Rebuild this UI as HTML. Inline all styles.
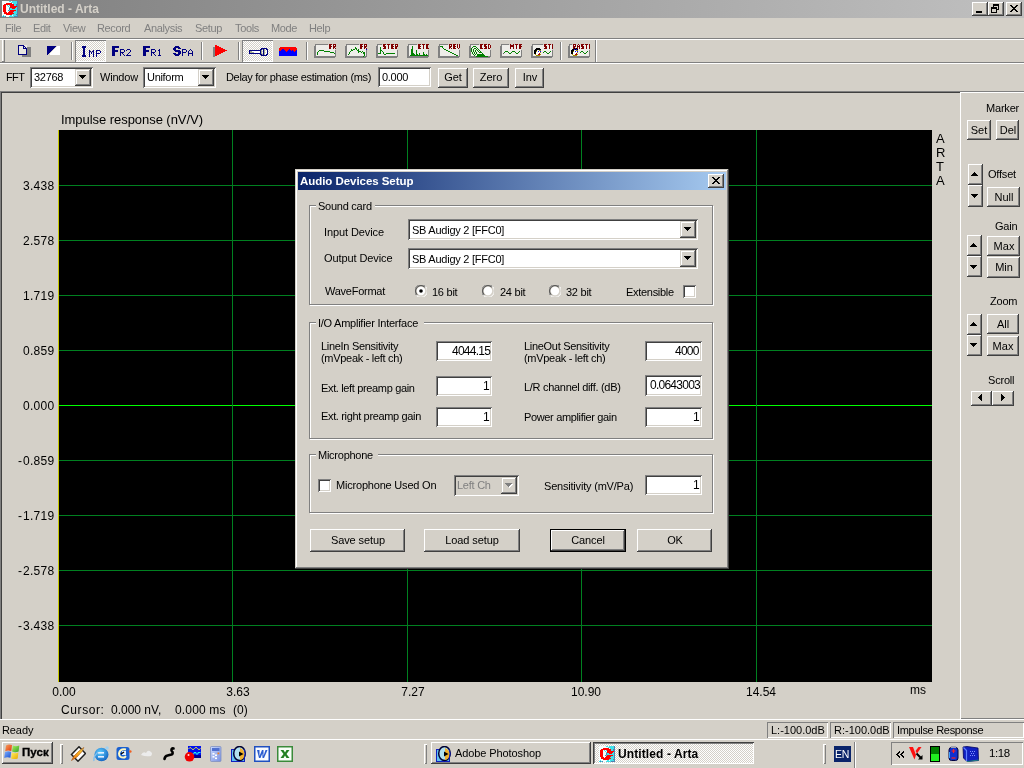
<!DOCTYPE html>
<html><head><meta charset="utf-8"><style>
html,body{margin:0;padding:0;}
body{width:1024px;height:768px;overflow:hidden;position:relative;background:#d4d0c8;-webkit-font-smoothing:antialiased;font-family:"Liberation Sans",sans-serif;font-size:11px;}
div,span,svg{position:absolute;box-sizing:border-box;}
.t{white-space:pre;will-change:transform;}
</style></head><body>
<div style="left:0px;top:0px;width:1024px;height:18px;background:linear-gradient(to right,#808080,#c0c0c0)"></div>
<svg style="left:2px;top:1px" width="16" height="16" viewBox="0 0 16 16" shape-rendering="crispEdges"><rect x="0" y="0" width="7" height="1" fill="#f4fcfc"/><rect x="9" y="0" width="1" height="1" fill="#f4fcfc"/><rect x="4" y="15" width="3" height="1" fill="#f4fcfc"/><rect x="0" y="1" width="9" height="1" fill="#f4fcfc"/><rect x="0" y="9" width="1" height="1" fill="#f4fcfc"/><rect x="4" y="9" width="2" height="1" fill="#f4fcfc"/><rect x="0" y="6" width="1" height="1" fill="#f4fcfc"/><rect x="4" y="6" width="3" height="1" fill="#f4fcfc"/><rect x="0" y="7" width="1" height="1" fill="#f4fcfc"/><rect x="4" y="7" width="3" height="1" fill="#f4fcfc"/><rect x="0" y="13" width="4" height="1" fill="#f4fcfc"/><rect x="0" y="2" width="4" height="1" fill="#f4fcfc"/><rect x="10" y="2" width="1" height="1" fill="#f4fcfc"/><rect x="0" y="10" width="1" height="1" fill="#f4fcfc"/><rect x="4" y="10" width="3" height="1" fill="#f4fcfc"/><rect x="0" y="5" width="1" height="1" fill="#f4fcfc"/><rect x="4" y="5" width="2" height="1" fill="#f4fcfc"/><rect x="7" y="5" width="1" height="1" fill="#f4fcfc"/><rect x="0" y="8" width="1" height="1" fill="#f4fcfc"/><rect x="4" y="8" width="3" height="1" fill="#f4fcfc"/><rect x="0" y="14" width="1" height="1" fill="#f4fcfc"/><rect x="2" y="14" width="6" height="1" fill="#f4fcfc"/><rect x="10" y="14" width="1" height="1" fill="#f4fcfc"/><rect x="0" y="3" width="2" height="1" fill="#f4fcfc"/><rect x="0" y="11" width="2" height="1" fill="#f4fcfc"/><rect x="5" y="11" width="1" height="1" fill="#f4fcfc"/><rect x="0" y="12" width="2" height="1" fill="#f4fcfc"/><rect x="0" y="4" width="1" height="1" fill="#f4fcfc"/><rect x="4" y="4" width="1" height="1" fill="#f4fcfc"/><rect x="6" y="4" width="1" height="1" fill="#f4fcfc"/><rect x="5" y="4" width="1" height="1" fill="#40e0e8"/><rect x="7" y="4" width="1" height="1" fill="#40e0e8"/><rect x="12" y="4" width="2" height="1" fill="#40e0e8"/><rect x="9" y="1" width="6" height="1" fill="#40e0e8"/><rect x="8" y="7" width="2" height="1" fill="#40e0e8"/><rect x="13" y="7" width="2" height="1" fill="#40e0e8"/><rect x="12" y="10" width="3" height="1" fill="#40e0e8"/><rect x="10" y="13" width="4" height="1" fill="#40e0e8"/><rect x="7" y="0" width="2" height="1" fill="#40e0e8"/><rect x="10" y="0" width="5" height="1" fill="#40e0e8"/><rect x="11" y="2" width="4" height="1" fill="#40e0e8"/><rect x="8" y="8" width="7" height="1" fill="#40e0e8"/><rect x="1" y="14" width="1" height="1" fill="#40e0e8"/><rect x="8" y="14" width="2" height="1" fill="#40e0e8"/><rect x="11" y="14" width="4" height="1" fill="#40e0e8"/><rect x="0" y="15" width="1" height="1" fill="#40e0e8"/><rect x="2" y="15" width="1" height="1" fill="#40e0e8"/><rect x="7" y="15" width="5" height="1" fill="#40e0e8"/><rect x="11" y="11" width="4" height="1" fill="#40e0e8"/><rect x="6" y="5" width="1" height="1" fill="#40e0e8"/><rect x="12" y="3" width="2" height="1" fill="#40e0e8"/><rect x="7" y="6" width="1" height="1" fill="#40e0e8"/><rect x="14" y="6" width="1" height="1" fill="#40e0e8"/><rect x="12" y="12" width="3" height="1" fill="#40e0e8"/><rect x="7" y="9" width="1" height="1" fill="#40e0e8"/><rect x="14" y="9" width="1" height="1" fill="#40e0e8"/><rect x="14" y="4" width="2" height="1" fill="#5080b0"/><rect x="14" y="13" width="2" height="1" fill="#5080b0"/><rect x="15" y="2" width="1" height="1" fill="#5080b0"/><rect x="15" y="5" width="1" height="1" fill="#5080b0"/><rect x="15" y="11" width="1" height="1" fill="#5080b0"/><rect x="7" y="7" width="1" height="1" fill="#5080b0"/><rect x="15" y="7" width="1" height="1" fill="#5080b0"/><rect x="7" y="8" width="1" height="1" fill="#5080b0"/><rect x="15" y="8" width="1" height="1" fill="#5080b0"/><rect x="15" y="14" width="1" height="1" fill="#5080b0"/><rect x="1" y="15" width="1" height="1" fill="#5080b0"/><rect x="3" y="15" width="1" height="1" fill="#5080b0"/><rect x="12" y="15" width="4" height="1" fill="#5080b0"/><rect x="14" y="3" width="2" height="1" fill="#5080b0"/><rect x="15" y="1" width="1" height="1" fill="#5080b0"/><rect x="15" y="10" width="1" height="1" fill="#5080b0"/><rect x="15" y="0" width="1" height="1" fill="#5080b0"/><rect x="15" y="6" width="1" height="1" fill="#5080b0"/><rect x="6" y="9" width="1" height="1" fill="#5080b0"/><rect x="15" y="9" width="1" height="1" fill="#5080b0"/><rect x="15" y="12" width="1" height="1" fill="#5080b0"/><rect x="1" y="9" width="3" height="1" fill="#ff0000"/><rect x="8" y="9" width="6" height="1" fill="#ff0000"/><rect x="1" y="6" width="3" height="1" fill="#ff0000"/><rect x="8" y="6" width="6" height="1" fill="#ff0000"/><rect x="1" y="5" width="3" height="1" fill="#ff0000"/><rect x="8" y="5" width="7" height="1" fill="#ff0000"/><rect x="2" y="11" width="3" height="1" fill="#ff0000"/><rect x="6" y="11" width="5" height="1" fill="#ff0000"/><rect x="4" y="2" width="6" height="1" fill="#ff0000"/><rect x="1" y="10" width="3" height="1" fill="#ff0000"/><rect x="7" y="10" width="5" height="1" fill="#ff0000"/><rect x="2" y="3" width="10" height="1" fill="#ff0000"/><rect x="2" y="12" width="10" height="1" fill="#ff0000"/><rect x="1" y="7" width="3" height="1" fill="#ff0000"/><rect x="10" y="7" width="3" height="1" fill="#ff0000"/><rect x="1" y="4" width="3" height="1" fill="#ff0000"/><rect x="8" y="4" width="4" height="1" fill="#ff0000"/><rect x="1" y="8" width="3" height="1" fill="#ff0000"/><rect x="4" y="13" width="6" height="1" fill="#ff0000"/></svg>
<span class="t" style="top:3px;font-size:12px;line-height:12px;color:#d4d0c8;font-weight:bold;left:20px;">Untitled - Arta</span>
<div style="left:972px;top:2px;width:16px;height:14px;background:#d4d0c8;box-shadow:inset -1px -1px #404040,inset 1px 1px #fff,inset -2px -2px #808080,inset 2px 2px #d4d0c8;"></div>
<div style="left:988px;top:2px;width:16px;height:14px;background:#d4d0c8;box-shadow:inset -1px -1px #404040,inset 1px 1px #fff,inset -2px -2px #808080,inset 2px 2px #d4d0c8;"></div>
<div style="left:1006px;top:2px;width:16px;height:14px;background:#d4d0c8;box-shadow:inset -1px -1px #404040,inset 1px 1px #fff,inset -2px -2px #808080,inset 2px 2px #d4d0c8;"></div>
<div style="left:976px;top:11px;width:6px;height:2px;background:#000"></div>
<svg style="left:991px;top:4px" width="8" height="9" viewBox="0 0 8 9" shape-rendering="crispEdges"><rect x="2" y="0" width="6" height="1" fill="#000"/><rect x="0" y="4" width="6" height="1" fill="#000"/><rect x="7" y="4" width="1" height="1" fill="#000"/><rect x="0" y="3" width="6" height="1" fill="#000"/><rect x="7" y="3" width="1" height="1" fill="#000"/><rect x="2" y="1" width="6" height="1" fill="#000"/><rect x="0" y="7" width="1" height="1" fill="#000"/><rect x="5" y="7" width="1" height="1" fill="#000"/><rect x="0" y="5" width="1" height="1" fill="#000"/><rect x="5" y="5" width="3" height="1" fill="#000"/><rect x="2" y="2" width="1" height="1" fill="#000"/><rect x="7" y="2" width="1" height="1" fill="#000"/><rect x="0" y="8" width="6" height="1" fill="#000"/><rect x="0" y="6" width="1" height="1" fill="#000"/><rect x="5" y="6" width="1" height="1" fill="#000"/></svg>
<svg style="left:1010px;top:5px" width="8" height="7" viewBox="0 0 8 7" shape-rendering="crispEdges"><rect x="2" y="4" width="4" height="1" fill="#000"/><rect x="3" y="3" width="2" height="1" fill="#000"/><rect x="1" y="1" width="2" height="1" fill="#000"/><rect x="5" y="1" width="2" height="1" fill="#000"/><rect x="2" y="2" width="4" height="1" fill="#000"/><rect x="0" y="0" width="2" height="1" fill="#000"/><rect x="6" y="0" width="2" height="1" fill="#000"/><rect x="0" y="6" width="2" height="1" fill="#000"/><rect x="6" y="6" width="2" height="1" fill="#000"/><rect x="1" y="5" width="2" height="1" fill="#000"/><rect x="5" y="5" width="2" height="1" fill="#000"/></svg>
<span class="t" style="top:23px;font-size:11px;line-height:11px;color:#808080;letter-spacing:-0.35px;left:5px;">File</span>
<span class="t" style="top:23px;font-size:11px;line-height:11px;color:#808080;letter-spacing:-0.35px;left:33px;">Edit</span>
<span class="t" style="top:23px;font-size:11px;line-height:11px;color:#808080;letter-spacing:-0.35px;left:63px;">View</span>
<span class="t" style="top:23px;font-size:11px;line-height:11px;color:#808080;letter-spacing:-0.35px;left:97px;">Record</span>
<span class="t" style="top:23px;font-size:11px;line-height:11px;color:#808080;letter-spacing:-0.35px;left:144px;">Analysis</span>
<span class="t" style="top:23px;font-size:11px;line-height:11px;color:#808080;letter-spacing:-0.35px;left:195px;">Setup</span>
<span class="t" style="top:23px;font-size:11px;line-height:11px;color:#808080;letter-spacing:-0.35px;left:235px;">Tools</span>
<span class="t" style="top:23px;font-size:11px;line-height:11px;color:#808080;letter-spacing:-0.35px;left:271px;">Mode</span>
<span class="t" style="top:23px;font-size:11px;line-height:11px;color:#808080;letter-spacing:-0.35px;left:309px;">Help</span>
<div style="left:0px;top:38px;width:1024px;height:1px;background:#808080"></div>
<div style="left:0px;top:39px;width:1024px;height:1px;background:#fff"></div>
<div style="left:2px;top:40px;width:1px;height:21px;background:#fff"></div>
<div style="left:4px;top:40px;width:1px;height:22px;background:#808080"></div>
<div style="left:2px;top:61px;width:3px;height:1px;background:#808080"></div>
<div style="left:0px;top:62px;width:1024px;height:1px;background:#808080"></div>
<div style="left:0px;top:63px;width:1024px;height:1px;background:#fff"></div>
<div style="left:595px;top:40px;width:1px;height:22px;background:#808080"></div>
<div style="left:596px;top:40px;width:1px;height:22px;background:#fff"></div>
<div style="left:71px;top:42px;width:1px;height:18px;background:#808080"></div>
<div style="left:72px;top:42px;width:1px;height:18px;background:#fff"></div>
<div style="left:75px;top:40px;width:31px;height:22px;background-color:#fff;background-image:linear-gradient(45deg,#d4d0c8 25%,transparent 25%,transparent 75%,#d4d0c8 75%),linear-gradient(45deg,#d4d0c8 25%,transparent 25%,transparent 75%,#d4d0c8 75%);background-size:2px 2px;background-position:0 0,1px 1px;box-shadow:inset 1px 1px #808080,inset -1px -1px #fff"></div>
<div style="left:201px;top:42px;width:1px;height:18px;background:#808080"></div>
<div style="left:202px;top:42px;width:1px;height:18px;background:#fff"></div>
<div style="left:238px;top:42px;width:1px;height:18px;background:#808080"></div>
<div style="left:239px;top:42px;width:1px;height:18px;background:#fff"></div>
<div style="left:242px;top:40px;width:31px;height:22px;background-color:#fff;background-image:linear-gradient(45deg,#d4d0c8 25%,transparent 25%,transparent 75%,#d4d0c8 75%),linear-gradient(45deg,#d4d0c8 25%,transparent 25%,transparent 75%,#d4d0c8 75%);background-size:2px 2px;background-position:0 0,1px 1px;box-shadow:inset 1px 1px #808080,inset -1px -1px #fff"></div>
<svg style="left:22px;top:47px" width="9" height="10" viewBox="0 0 9 10" shape-rendering="crispEdges"><rect x="0" y="0" width="9" height="1" fill="#808080"/><rect x="0" y="9" width="9" height="1" fill="#808080"/><rect x="0" y="1" width="9" height="1" fill="#808080"/><rect x="0" y="5" width="9" height="1" fill="#808080"/><rect x="0" y="2" width="9" height="1" fill="#808080"/><rect x="0" y="6" width="9" height="1" fill="#808080"/><rect x="0" y="3" width="9" height="1" fill="#808080"/><rect x="0" y="7" width="9" height="1" fill="#808080"/><rect x="0" y="4" width="9" height="1" fill="#808080"/><rect x="0" y="8" width="9" height="1" fill="#808080"/></svg><svg style="left:18px;top:45px" width="9" height="10" viewBox="0 0 9 10" shape-rendering="crispEdges"><rect x="0" y="0" width="6" height="1" fill="#000080"/><rect x="0" y="9" width="9" height="1" fill="#000080"/><rect x="0" y="1" width="1" height="1" fill="#000080"/><rect x="5" y="1" width="2" height="1" fill="#000080"/><rect x="0" y="2" width="1" height="1" fill="#000080"/><rect x="5" y="2" width="1" height="1" fill="#000080"/><rect x="7" y="2" width="1" height="1" fill="#000080"/><rect x="0" y="3" width="1" height="1" fill="#000080"/><rect x="5" y="3" width="4" height="1" fill="#000080"/><rect x="0" y="5" width="1" height="1" fill="#000080"/><rect x="8" y="5" width="1" height="1" fill="#000080"/><rect x="0" y="6" width="1" height="1" fill="#000080"/><rect x="8" y="6" width="1" height="1" fill="#000080"/><rect x="0" y="8" width="1" height="1" fill="#000080"/><rect x="8" y="8" width="1" height="1" fill="#000080"/><rect x="0" y="7" width="1" height="1" fill="#000080"/><rect x="8" y="7" width="1" height="1" fill="#000080"/><rect x="0" y="4" width="1" height="1" fill="#000080"/><rect x="8" y="4" width="1" height="1" fill="#000080"/><rect x="1" y="4" width="7" height="1" fill="#e8e6e0"/><rect x="1" y="3" width="4" height="1" fill="#e8e6e0"/><rect x="1" y="1" width="4" height="1" fill="#e8e6e0"/><rect x="7" y="1" width="2" height="1" fill="#e8e6e0"/><rect x="1" y="7" width="7" height="1" fill="#e8e6e0"/><rect x="1" y="6" width="7" height="1" fill="#e8e6e0"/><rect x="6" y="0" width="3" height="1" fill="#e8e6e0"/><rect x="1" y="2" width="4" height="1" fill="#e8e6e0"/><rect x="6" y="2" width="1" height="1" fill="#e8e6e0"/><rect x="8" y="2" width="1" height="1" fill="#e8e6e0"/><rect x="1" y="5" width="7" height="1" fill="#e8e6e0"/><rect x="1" y="8" width="7" height="1" fill="#e8e6e0"/></svg><svg style="left:47px;top:46px" width="13" height="9" viewBox="0 0 13 9" shape-rendering="crispEdges"><rect x="0" y="0" width="9" height="1" fill="#000080"/><rect x="0" y="4" width="5" height="1" fill="#000080"/><rect x="0" y="3" width="6" height="1" fill="#000080"/><rect x="0" y="1" width="8" height="1" fill="#000080"/><rect x="0" y="2" width="7" height="1" fill="#000080"/><rect x="0" y="5" width="4" height="1" fill="#000080"/><rect x="0" y="6" width="3" height="1" fill="#000080"/><rect x="0" y="8" width="1" height="1" fill="#000080"/><rect x="0" y="7" width="2" height="1" fill="#000080"/><rect x="6" y="4" width="7" height="1" fill="#ffffff"/><rect x="9" y="1" width="4" height="1" fill="#ffffff"/><rect x="3" y="7" width="10" height="1" fill="#ffffff"/><rect x="4" y="6" width="9" height="1" fill="#ffffff"/><rect x="8" y="2" width="5" height="1" fill="#ffffff"/><rect x="5" y="5" width="8" height="1" fill="#ffffff"/><rect x="10" y="0" width="3" height="1" fill="#ffffff"/><rect x="7" y="3" width="6" height="1" fill="#ffffff"/><rect x="3" y="8" width="10" height="1" fill="#ffffff"/></svg><svg style="left:82px;top:46px" width="4" height="11" viewBox="0 0 4 11" shape-rendering="crispEdges"><rect x="0" y="1" width="4" height="1" fill="#000080"/><rect x="0" y="10" width="4" height="1" fill="#000080"/><rect x="1" y="2" width="2" height="1" fill="#000080"/><rect x="0" y="0" width="4" height="1" fill="#000080"/><rect x="1" y="6" width="2" height="1" fill="#000080"/><rect x="1" y="5" width="2" height="1" fill="#000080"/><rect x="1" y="3" width="2" height="1" fill="#000080"/><rect x="0" y="9" width="4" height="1" fill="#000080"/><rect x="1" y="8" width="2" height="1" fill="#000080"/><rect x="1" y="4" width="2" height="1" fill="#000080"/><rect x="1" y="7" width="2" height="1" fill="#000080"/></svg><svg style="left:89px;top:50px" width="5" height="7" viewBox="0 0 5 7" shape-rendering="crispEdges"><rect x="0" y="1" width="2" height="1" fill="#000080"/><rect x="3" y="1" width="2" height="1" fill="#000080"/><rect x="0" y="4" width="1" height="1" fill="#000080"/><rect x="4" y="4" width="1" height="1" fill="#000080"/><rect x="0" y="0" width="1" height="1" fill="#000080"/><rect x="4" y="0" width="1" height="1" fill="#000080"/><rect x="0" y="3" width="1" height="1" fill="#000080"/><rect x="2" y="3" width="1" height="1" fill="#000080"/><rect x="4" y="3" width="1" height="1" fill="#000080"/><rect x="0" y="6" width="1" height="1" fill="#000080"/><rect x="4" y="6" width="1" height="1" fill="#000080"/><rect x="0" y="2" width="1" height="1" fill="#000080"/><rect x="2" y="2" width="1" height="1" fill="#000080"/><rect x="4" y="2" width="1" height="1" fill="#000080"/><rect x="0" y="5" width="1" height="1" fill="#000080"/><rect x="4" y="5" width="1" height="1" fill="#000080"/></svg><svg style="left:96px;top:50px" width="5" height="7" viewBox="0 0 5 7" shape-rendering="crispEdges"><rect x="0" y="1" width="1" height="1" fill="#000080"/><rect x="4" y="1" width="1" height="1" fill="#000080"/><rect x="0" y="3" width="4" height="1" fill="#000080"/><rect x="0" y="4" width="1" height="1" fill="#000080"/><rect x="0" y="0" width="4" height="1" fill="#000080"/><rect x="0" y="2" width="1" height="1" fill="#000080"/><rect x="4" y="2" width="1" height="1" fill="#000080"/><rect x="0" y="6" width="1" height="1" fill="#000080"/><rect x="0" y="5" width="1" height="1" fill="#000080"/></svg><svg style="left:112px;top:46px" width="7" height="10" viewBox="0 0 7 10" shape-rendering="crispEdges"><rect x="0" y="0" width="7" height="1" fill="#000080"/><rect x="0" y="4" width="6" height="1" fill="#000080"/><rect x="0" y="1" width="7" height="1" fill="#000080"/><rect x="0" y="2" width="3" height="1" fill="#000080"/><rect x="0" y="5" width="6" height="1" fill="#000080"/><rect x="0" y="6" width="3" height="1" fill="#000080"/><rect x="0" y="8" width="3" height="1" fill="#000080"/><rect x="0" y="3" width="3" height="1" fill="#000080"/><rect x="0" y="9" width="3" height="1" fill="#000080"/><rect x="0" y="7" width="3" height="1" fill="#000080"/></svg><svg style="left:120px;top:49px" width="5" height="7" viewBox="0 0 5 7" shape-rendering="crispEdges"><rect x="0" y="1" width="1" height="1" fill="#000080"/><rect x="4" y="1" width="1" height="1" fill="#000080"/><rect x="0" y="3" width="4" height="1" fill="#000080"/><rect x="0" y="4" width="1" height="1" fill="#000080"/><rect x="2" y="4" width="1" height="1" fill="#000080"/><rect x="0" y="0" width="4" height="1" fill="#000080"/><rect x="0" y="6" width="1" height="1" fill="#000080"/><rect x="4" y="6" width="1" height="1" fill="#000080"/><rect x="0" y="2" width="1" height="1" fill="#000080"/><rect x="4" y="2" width="1" height="1" fill="#000080"/><rect x="0" y="5" width="1" height="1" fill="#000080"/><rect x="3" y="5" width="1" height="1" fill="#000080"/></svg><svg style="left:126px;top:49px" width="5" height="7" viewBox="0 0 5 7" shape-rendering="crispEdges"><rect x="0" y="1" width="1" height="1" fill="#000080"/><rect x="4" y="1" width="1" height="1" fill="#000080"/><rect x="2" y="4" width="1" height="1" fill="#000080"/><rect x="1" y="5" width="1" height="1" fill="#000080"/><rect x="0" y="6" width="5" height="1" fill="#000080"/><rect x="1" y="0" width="3" height="1" fill="#000080"/><rect x="4" y="2" width="1" height="1" fill="#000080"/><rect x="3" y="3" width="1" height="1" fill="#000080"/></svg><svg style="left:143px;top:46px" width="7" height="10" viewBox="0 0 7 10" shape-rendering="crispEdges"><rect x="0" y="0" width="7" height="1" fill="#000080"/><rect x="0" y="4" width="6" height="1" fill="#000080"/><rect x="0" y="1" width="7" height="1" fill="#000080"/><rect x="0" y="2" width="3" height="1" fill="#000080"/><rect x="0" y="5" width="6" height="1" fill="#000080"/><rect x="0" y="6" width="3" height="1" fill="#000080"/><rect x="0" y="8" width="3" height="1" fill="#000080"/><rect x="0" y="3" width="3" height="1" fill="#000080"/><rect x="0" y="9" width="3" height="1" fill="#000080"/><rect x="0" y="7" width="3" height="1" fill="#000080"/></svg><svg style="left:151px;top:49px" width="5" height="7" viewBox="0 0 5 7" shape-rendering="crispEdges"><rect x="0" y="1" width="1" height="1" fill="#000080"/><rect x="4" y="1" width="1" height="1" fill="#000080"/><rect x="0" y="3" width="4" height="1" fill="#000080"/><rect x="0" y="4" width="1" height="1" fill="#000080"/><rect x="2" y="4" width="1" height="1" fill="#000080"/><rect x="0" y="0" width="4" height="1" fill="#000080"/><rect x="0" y="6" width="1" height="1" fill="#000080"/><rect x="4" y="6" width="1" height="1" fill="#000080"/><rect x="0" y="2" width="1" height="1" fill="#000080"/><rect x="4" y="2" width="1" height="1" fill="#000080"/><rect x="0" y="5" width="1" height="1" fill="#000080"/><rect x="3" y="5" width="1" height="1" fill="#000080"/></svg><svg style="left:157px;top:49px" width="5" height="7" viewBox="0 0 5 7" shape-rendering="crispEdges"><rect x="2" y="4" width="1" height="1" fill="#000080"/><rect x="1" y="1" width="2" height="1" fill="#000080"/><rect x="2" y="0" width="1" height="1" fill="#000080"/><rect x="2" y="3" width="1" height="1" fill="#000080"/><rect x="1" y="6" width="3" height="1" fill="#000080"/><rect x="2" y="2" width="1" height="1" fill="#000080"/><rect x="2" y="5" width="1" height="1" fill="#000080"/></svg><svg style="left:173px;top:46px" width="8" height="10" viewBox="0 0 8 10" shape-rendering="crispEdges"><rect x="2" y="0" width="4" height="1" fill="#000080"/><rect x="1" y="4" width="6" height="1" fill="#000080"/><rect x="1" y="1" width="6" height="1" fill="#000080"/><rect x="2" y="9" width="4" height="1" fill="#000080"/><rect x="0" y="7" width="3" height="1" fill="#000080"/><rect x="5" y="7" width="3" height="1" fill="#000080"/><rect x="0" y="2" width="3" height="1" fill="#000080"/><rect x="5" y="2" width="3" height="1" fill="#000080"/><rect x="2" y="5" width="6" height="1" fill="#000080"/><rect x="0" y="3" width="3" height="1" fill="#000080"/><rect x="1" y="8" width="6" height="1" fill="#000080"/><rect x="5" y="6" width="3" height="1" fill="#000080"/></svg><svg style="left:182px;top:49px" width="5" height="7" viewBox="0 0 5 7" shape-rendering="crispEdges"><rect x="0" y="1" width="1" height="1" fill="#000080"/><rect x="4" y="1" width="1" height="1" fill="#000080"/><rect x="0" y="3" width="4" height="1" fill="#000080"/><rect x="0" y="4" width="1" height="1" fill="#000080"/><rect x="0" y="0" width="4" height="1" fill="#000080"/><rect x="0" y="2" width="1" height="1" fill="#000080"/><rect x="4" y="2" width="1" height="1" fill="#000080"/><rect x="0" y="6" width="1" height="1" fill="#000080"/><rect x="0" y="5" width="1" height="1" fill="#000080"/></svg><svg style="left:188px;top:49px" width="5" height="7" viewBox="0 0 5 7" shape-rendering="crispEdges"><rect x="0" y="4" width="5" height="1" fill="#000080"/><rect x="0" y="3" width="1" height="1" fill="#000080"/><rect x="4" y="3" width="1" height="1" fill="#000080"/><rect x="1" y="1" width="1" height="1" fill="#000080"/><rect x="3" y="1" width="1" height="1" fill="#000080"/><rect x="2" y="0" width="1" height="1" fill="#000080"/><rect x="0" y="6" width="1" height="1" fill="#000080"/><rect x="4" y="6" width="1" height="1" fill="#000080"/><rect x="0" y="2" width="1" height="1" fill="#000080"/><rect x="4" y="2" width="1" height="1" fill="#000080"/><rect x="0" y="5" width="1" height="1" fill="#000080"/><rect x="4" y="5" width="1" height="1" fill="#000080"/></svg><svg style="left:213px;top:45px" width="14" height="12" viewBox="0 0 14 12" shape-rendering="crispEdges"><rect x="2" y="4" width="10" height="1" fill="#ff0000"/><rect x="2" y="3" width="8" height="1" fill="#ff0000"/><rect x="2" y="1" width="4" height="1" fill="#ff0000"/><rect x="2" y="7" width="8" height="1" fill="#ff0000"/><rect x="2" y="6" width="10" height="1" fill="#ff0000"/><rect x="2" y="9" width="4" height="1" fill="#ff0000"/><rect x="2" y="10" width="2" height="1" fill="#ff0000"/><rect x="2" y="5" width="12" height="1" fill="#ff0000"/><rect x="2" y="2" width="6" height="1" fill="#ff0000"/><rect x="2" y="8" width="6" height="1" fill="#ff0000"/><rect x="2" y="0" width="2" height="1" fill="#ff0000"/><rect x="0" y="2" width="2" height="1" fill="#808080"/><rect x="0" y="5" width="2" height="1" fill="#808080"/><rect x="0" y="6" width="2" height="1" fill="#808080"/><rect x="0" y="8" width="2" height="1" fill="#808080"/><rect x="0" y="3" width="2" height="1" fill="#808080"/><rect x="0" y="9" width="2" height="1" fill="#808080"/><rect x="0" y="11" width="2" height="1" fill="#808080"/><rect x="0" y="7" width="2" height="1" fill="#808080"/><rect x="0" y="4" width="2" height="1" fill="#808080"/><rect x="0" y="10" width="2" height="1" fill="#808080"/></svg><svg style="left:249px;top:48px" width="19" height="8" viewBox="0 0 19 8" shape-rendering="crispEdges"><rect x="11" y="1" width="2" height="1" fill="#000080"/><rect x="14" y="1" width="1" height="1" fill="#000080"/><rect x="17" y="1" width="2" height="1" fill="#000080"/><rect x="12" y="7" width="6" height="1" fill="#000080"/><rect x="0" y="4" width="1" height="1" fill="#000080"/><rect x="11" y="4" width="1" height="1" fill="#000080"/><rect x="14" y="4" width="1" height="1" fill="#000080"/><rect x="18" y="4" width="1" height="1" fill="#000080"/><rect x="12" y="0" width="6" height="1" fill="#000080"/><rect x="0" y="2" width="12" height="1" fill="#000080"/><rect x="14" y="2" width="1" height="1" fill="#000080"/><rect x="18" y="2" width="1" height="1" fill="#000080"/><rect x="0" y="5" width="12" height="1" fill="#000080"/><rect x="14" y="5" width="1" height="1" fill="#000080"/><rect x="18" y="5" width="1" height="1" fill="#000080"/><rect x="11" y="6" width="2" height="1" fill="#000080"/><rect x="14" y="6" width="1" height="1" fill="#000080"/><rect x="17" y="6" width="2" height="1" fill="#000080"/><rect x="0" y="3" width="1" height="1" fill="#000080"/><rect x="11" y="3" width="1" height="1" fill="#000080"/><rect x="14" y="3" width="1" height="1" fill="#000080"/><rect x="18" y="3" width="1" height="1" fill="#000080"/><rect x="1" y="4" width="4" height="1" fill="#a0a890"/><rect x="12" y="4" width="1" height="1" fill="#a0a890"/><rect x="15" y="4" width="1" height="1" fill="#a0a890"/><rect x="12" y="5" width="1" height="1" fill="#a0a890"/><rect x="15" y="5" width="1" height="1" fill="#a0a890"/><rect x="13" y="1" width="1" height="1" fill="#a0a890"/><rect x="15" y="1" width="1" height="1" fill="#a0a890"/><rect x="1" y="3" width="2" height="1" fill="#a0a890"/><rect x="12" y="3" width="1" height="1" fill="#a0a890"/><rect x="15" y="3" width="1" height="1" fill="#a0a890"/><rect x="13" y="6" width="1" height="1" fill="#a0a890"/><rect x="15" y="6" width="1" height="1" fill="#a0a890"/><rect x="12" y="2" width="1" height="1" fill="#a0a890"/><rect x="15" y="2" width="1" height="1" fill="#a0a890"/><rect x="3" y="3" width="8" height="1" fill="#ffffff"/><rect x="17" y="3" width="1" height="1" fill="#ffffff"/><rect x="5" y="4" width="6" height="1" fill="#ffffff"/><rect x="17" y="4" width="1" height="1" fill="#ffffff"/><rect x="16" y="1" width="1" height="1" fill="#ffffff"/><rect x="17" y="2" width="1" height="1" fill="#ffffff"/><rect x="17" y="5" width="1" height="1" fill="#ffffff"/><rect x="16" y="6" width="1" height="1" fill="#ffffff"/></svg><svg style="left:279px;top:47px" width="18" height="9" viewBox="0 0 18 9" shape-rendering="crispEdges"><rect x="1" y="0" width="16" height="1" fill="#ff0000"/><rect x="0" y="1" width="18" height="1" fill="#ff0000"/><rect x="0" y="2" width="3" height="1" fill="#ff0000"/><rect x="5" y="2" width="5" height="1" fill="#ff0000"/><rect x="11" y="2" width="7" height="1" fill="#ff0000"/><rect x="0" y="3" width="2" height="1" fill="#ff0000"/><rect x="6" y="3" width="3" height="1" fill="#ff0000"/><rect x="12" y="3" width="1" height="1" fill="#ff0000"/><rect x="14" y="3" width="3" height="1" fill="#ff0000"/><rect x="7" y="4" width="1" height="1" fill="#ff0000"/><rect x="15" y="4" width="1" height="1" fill="#ff0000"/><rect x="0" y="4" width="7" height="1" fill="#0000ff"/><rect x="8" y="4" width="7" height="1" fill="#0000ff"/><rect x="16" y="4" width="2" height="1" fill="#0000ff"/><rect x="2" y="3" width="4" height="1" fill="#0000ff"/><rect x="9" y="3" width="3" height="1" fill="#0000ff"/><rect x="13" y="3" width="1" height="1" fill="#0000ff"/><rect x="17" y="3" width="1" height="1" fill="#0000ff"/><rect x="0" y="6" width="18" height="1" fill="#0000ff"/><rect x="0" y="8" width="18" height="1" fill="#0000ff"/><rect x="0" y="5" width="18" height="1" fill="#0000ff"/><rect x="3" y="2" width="2" height="1" fill="#0000ff"/><rect x="10" y="2" width="1" height="1" fill="#0000ff"/><rect x="0" y="7" width="18" height="1" fill="#0000ff"/></svg>
<div style="left:306px;top:42px;width:1px;height:18px;background:#808080"></div>
<div style="left:307px;top:42px;width:1px;height:18px;background:#fff"></div>
<svg style="left:314px;top:44px" width="23" height="14" viewBox="0 0 23 14" shape-rendering="crispEdges"><rect x="2" y="1" width="19" height="11" fill="#eeede9"/><rect x="1" y="0" width="13" height="1" fill="#808080"/><rect x="0" y="13" width="21" height="1" fill="#808080"/><rect x="0" y="12" width="22" height="1" fill="#808080"/><rect x="0" y="5" width="2" height="1" fill="#808080"/><rect x="0" y="9" width="2" height="1" fill="#808080"/><rect x="21" y="9" width="1" height="1" fill="#808080"/><rect x="0" y="7" width="2" height="1" fill="#808080"/><rect x="21" y="7" width="1" height="1" fill="#808080"/><rect x="0" y="8" width="2" height="1" fill="#808080"/><rect x="21" y="8" width="1" height="1" fill="#808080"/><rect x="0" y="10" width="2" height="1" fill="#808080"/><rect x="21" y="10" width="1" height="1" fill="#808080"/><rect x="0" y="2" width="2" height="1" fill="#808080"/><rect x="0" y="3" width="2" height="1" fill="#808080"/><rect x="0" y="11" width="2" height="1" fill="#808080"/><rect x="21" y="11" width="1" height="1" fill="#808080"/><rect x="0" y="6" width="2" height="1" fill="#808080"/><rect x="21" y="6" width="1" height="1" fill="#808080"/><rect x="0" y="4" width="2" height="1" fill="#808080"/><rect x="1" y="1" width="1" height="1" fill="#808080"/><rect x="4" y="7" width="1" height="1" fill="#008000"/><rect x="10" y="7" width="6" height="1" fill="#008000"/><rect x="3" y="10" width="1" height="1" fill="#008000"/><rect x="5" y="6" width="5" height="1" fill="#008000"/><rect x="3" y="9" width="1" height="1" fill="#008000"/><rect x="20" y="9" width="1" height="1" fill="#008000"/><rect x="3" y="8" width="1" height="1" fill="#008000"/><rect x="16" y="8" width="4" height="1" fill="#008000"/><rect x="15" y="0" width="3" height="1" fill="#800000"/><rect x="19" y="0" width="3" height="1" fill="#800000"/><rect x="15" y="3" width="2" height="1" fill="#800000"/><rect x="19" y="3" width="2" height="1" fill="#800000"/><rect x="15" y="4" width="2" height="1" fill="#800000"/><rect x="19" y="4" width="1" height="1" fill="#800000"/><rect x="21" y="4" width="1" height="1" fill="#800000"/><rect x="15" y="2" width="3" height="1" fill="#800000"/><rect x="19" y="2" width="3" height="1" fill="#800000"/><rect x="15" y="1" width="2" height="1" fill="#800000"/><rect x="19" y="1" width="1" height="1" fill="#800000"/><rect x="21" y="1" width="1" height="1" fill="#800000"/></svg><svg style="left:345px;top:44px" width="23" height="14" viewBox="0 0 23 14" shape-rendering="crispEdges"><rect x="2" y="1" width="19" height="11" fill="#eeede9"/><rect x="1" y="0" width="13" height="1" fill="#808080"/><rect x="0" y="13" width="21" height="1" fill="#808080"/><rect x="0" y="12" width="22" height="1" fill="#808080"/><rect x="0" y="5" width="2" height="1" fill="#808080"/><rect x="0" y="9" width="2" height="1" fill="#808080"/><rect x="21" y="9" width="1" height="1" fill="#808080"/><rect x="0" y="7" width="2" height="1" fill="#808080"/><rect x="21" y="7" width="1" height="1" fill="#808080"/><rect x="0" y="8" width="2" height="1" fill="#808080"/><rect x="21" y="8" width="1" height="1" fill="#808080"/><rect x="0" y="10" width="2" height="1" fill="#808080"/><rect x="21" y="10" width="1" height="1" fill="#808080"/><rect x="0" y="2" width="2" height="1" fill="#808080"/><rect x="0" y="3" width="2" height="1" fill="#808080"/><rect x="0" y="11" width="2" height="1" fill="#808080"/><rect x="21" y="11" width="1" height="1" fill="#808080"/><rect x="0" y="6" width="2" height="1" fill="#808080"/><rect x="21" y="6" width="1" height="1" fill="#808080"/><rect x="0" y="4" width="2" height="1" fill="#808080"/><rect x="1" y="1" width="1" height="1" fill="#808080"/><rect x="4" y="9" width="1" height="1" fill="#008000"/><rect x="18" y="9" width="2" height="1" fill="#008000"/><rect x="5" y="7" width="1" height="1" fill="#008000"/><rect x="13" y="7" width="3" height="1" fill="#008000"/><rect x="17" y="7" width="1" height="1" fill="#008000"/><rect x="3" y="10" width="1" height="1" fill="#008000"/><rect x="19" y="10" width="1" height="1" fill="#008000"/><rect x="6" y="5" width="1" height="1" fill="#008000"/><rect x="8" y="5" width="2" height="1" fill="#008000"/><rect x="11" y="5" width="1" height="1" fill="#008000"/><rect x="13" y="5" width="1" height="1" fill="#008000"/><rect x="10" y="3" width="1" height="1" fill="#008000"/><rect x="4" y="8" width="1" height="1" fill="#008000"/><rect x="13" y="8" width="1" height="1" fill="#008000"/><rect x="16" y="8" width="1" height="1" fill="#008000"/><rect x="18" y="8" width="2" height="1" fill="#008000"/><rect x="6" y="6" width="2" height="1" fill="#008000"/><rect x="12" y="6" width="2" height="1" fill="#008000"/><rect x="10" y="4" width="2" height="1" fill="#008000"/><rect x="19" y="11" width="1" height="1" fill="#008000"/><rect x="18" y="12" width="1" height="1" fill="#008000"/><rect x="21" y="5" width="1" height="1" fill="#0000c0"/><rect x="15" y="0" width="3" height="1" fill="#800000"/><rect x="19" y="0" width="3" height="1" fill="#800000"/><rect x="15" y="3" width="2" height="1" fill="#800000"/><rect x="19" y="3" width="2" height="1" fill="#800000"/><rect x="15" y="4" width="2" height="1" fill="#800000"/><rect x="19" y="4" width="1" height="1" fill="#800000"/><rect x="21" y="4" width="1" height="1" fill="#800000"/><rect x="15" y="2" width="3" height="1" fill="#800000"/><rect x="19" y="2" width="3" height="1" fill="#800000"/><rect x="15" y="1" width="2" height="1" fill="#800000"/><rect x="19" y="1" width="1" height="1" fill="#800000"/><rect x="21" y="1" width="1" height="1" fill="#800000"/></svg><svg style="left:376px;top:44px" width="23" height="14" viewBox="0 0 23 14" shape-rendering="crispEdges"><rect x="2" y="1" width="19" height="11" fill="#eeede9"/><rect x="0" y="12" width="22" height="1" fill="#808080"/><rect x="1" y="0" width="5" height="1" fill="#808080"/><rect x="0" y="13" width="21" height="1" fill="#808080"/><rect x="0" y="10" width="2" height="1" fill="#808080"/><rect x="21" y="10" width="1" height="1" fill="#808080"/><rect x="0" y="2" width="2" height="1" fill="#808080"/><rect x="0" y="5" width="2" height="1" fill="#808080"/><rect x="0" y="6" width="2" height="1" fill="#808080"/><rect x="21" y="6" width="1" height="1" fill="#808080"/><rect x="0" y="8" width="2" height="1" fill="#808080"/><rect x="21" y="8" width="1" height="1" fill="#808080"/><rect x="0" y="3" width="2" height="1" fill="#808080"/><rect x="0" y="9" width="2" height="1" fill="#808080"/><rect x="21" y="9" width="1" height="1" fill="#808080"/><rect x="0" y="11" width="2" height="1" fill="#808080"/><rect x="21" y="11" width="1" height="1" fill="#808080"/><rect x="0" y="7" width="2" height="1" fill="#808080"/><rect x="21" y="7" width="1" height="1" fill="#808080"/><rect x="0" y="4" width="2" height="1" fill="#808080"/><rect x="1" y="1" width="1" height="1" fill="#808080"/><rect x="4" y="3" width="1" height="1" fill="#008000"/><rect x="2" y="9" width="3" height="1" fill="#008000"/><rect x="7" y="9" width="1" height="1" fill="#008000"/><rect x="10" y="9" width="9" height="1" fill="#008000"/><rect x="4" y="6" width="2" height="1" fill="#008000"/><rect x="4" y="5" width="1" height="1" fill="#008000"/><rect x="4" y="8" width="1" height="1" fill="#008000"/><rect x="7" y="8" width="1" height="1" fill="#008000"/><rect x="8" y="10" width="2" height="1" fill="#008000"/><rect x="4" y="7" width="1" height="1" fill="#008000"/><rect x="6" y="7" width="1" height="1" fill="#008000"/><rect x="4" y="4" width="1" height="1" fill="#008000"/><rect x="7" y="4" width="3" height="1" fill="#800000"/><rect x="12" y="4" width="1" height="1" fill="#800000"/><rect x="15" y="4" width="3" height="1" fill="#800000"/><rect x="19" y="4" width="2" height="1" fill="#800000"/><rect x="7" y="1" width="2" height="1" fill="#800000"/><rect x="12" y="1" width="1" height="1" fill="#800000"/><rect x="15" y="1" width="2" height="1" fill="#800000"/><rect x="19" y="1" width="1" height="1" fill="#800000"/><rect x="21" y="1" width="1" height="1" fill="#800000"/><rect x="7" y="0" width="3" height="1" fill="#800000"/><rect x="11" y="0" width="3" height="1" fill="#800000"/><rect x="15" y="0" width="3" height="1" fill="#800000"/><rect x="19" y="0" width="3" height="1" fill="#800000"/><rect x="7" y="2" width="3" height="1" fill="#800000"/><rect x="12" y="2" width="1" height="1" fill="#800000"/><rect x="15" y="2" width="3" height="1" fill="#800000"/><rect x="19" y="2" width="3" height="1" fill="#800000"/><rect x="8" y="3" width="2" height="1" fill="#800000"/><rect x="12" y="3" width="1" height="1" fill="#800000"/><rect x="15" y="3" width="2" height="1" fill="#800000"/><rect x="19" y="3" width="2" height="1" fill="#800000"/></svg><svg style="left:407px;top:44px" width="23" height="14" viewBox="0 0 23 14" shape-rendering="crispEdges"><rect x="2" y="1" width="19" height="11" fill="#eeede9"/><rect x="1" y="0" width="9" height="1" fill="#808080"/><rect x="0" y="13" width="21" height="1" fill="#808080"/><rect x="0" y="12" width="22" height="1" fill="#808080"/><rect x="0" y="5" width="2" height="1" fill="#808080"/><rect x="0" y="9" width="2" height="1" fill="#808080"/><rect x="21" y="9" width="1" height="1" fill="#808080"/><rect x="0" y="7" width="2" height="1" fill="#808080"/><rect x="21" y="7" width="1" height="1" fill="#808080"/><rect x="0" y="8" width="2" height="1" fill="#808080"/><rect x="21" y="8" width="1" height="1" fill="#808080"/><rect x="0" y="10" width="2" height="1" fill="#808080"/><rect x="21" y="10" width="1" height="1" fill="#808080"/><rect x="0" y="2" width="2" height="1" fill="#808080"/><rect x="0" y="3" width="2" height="1" fill="#808080"/><rect x="0" y="11" width="2" height="1" fill="#808080"/><rect x="21" y="11" width="1" height="1" fill="#808080"/><rect x="0" y="6" width="2" height="1" fill="#808080"/><rect x="21" y="6" width="1" height="1" fill="#808080"/><rect x="0" y="4" width="2" height="1" fill="#808080"/><rect x="1" y="1" width="1" height="1" fill="#808080"/><rect x="3" y="11" width="18" height="1" fill="#008000"/><rect x="4" y="9" width="3" height="1" fill="#008000"/><rect x="9" y="9" width="1" height="1" fill="#008000"/><rect x="12" y="9" width="1" height="1" fill="#008000"/><rect x="16" y="9" width="1" height="1" fill="#008000"/><rect x="4" y="10" width="4" height="1" fill="#008000"/><rect x="9" y="10" width="2" height="1" fill="#008000"/><rect x="12" y="10" width="1" height="1" fill="#008000"/><rect x="16" y="10" width="2" height="1" fill="#008000"/><rect x="19" y="10" width="1" height="1" fill="#008000"/><rect x="5" y="4" width="1" height="1" fill="#008000"/><rect x="4" y="6" width="2" height="1" fill="#008000"/><rect x="9" y="6" width="1" height="1" fill="#008000"/><rect x="4" y="7" width="2" height="1" fill="#008000"/><rect x="9" y="7" width="1" height="1" fill="#008000"/><rect x="4" y="8" width="2" height="1" fill="#008000"/><rect x="9" y="8" width="1" height="1" fill="#008000"/><rect x="16" y="8" width="1" height="1" fill="#008000"/><rect x="4" y="5" width="2" height="1" fill="#008000"/><rect x="5" y="3" width="1" height="1" fill="#008000"/><rect x="5" y="2" width="1" height="1" fill="#008000"/><rect x="11" y="4" width="3" height="1" fill="#800000"/><rect x="16" y="4" width="1" height="1" fill="#800000"/><rect x="19" y="4" width="3" height="1" fill="#800000"/><rect x="11" y="1" width="2" height="1" fill="#800000"/><rect x="16" y="1" width="1" height="1" fill="#800000"/><rect x="19" y="1" width="2" height="1" fill="#800000"/><rect x="11" y="0" width="3" height="1" fill="#800000"/><rect x="15" y="0" width="3" height="1" fill="#800000"/><rect x="19" y="0" width="3" height="1" fill="#800000"/><rect x="11" y="2" width="3" height="1" fill="#800000"/><rect x="16" y="2" width="1" height="1" fill="#800000"/><rect x="19" y="2" width="2" height="1" fill="#800000"/><rect x="11" y="3" width="2" height="1" fill="#800000"/><rect x="16" y="3" width="1" height="1" fill="#800000"/><rect x="19" y="3" width="2" height="1" fill="#800000"/></svg><svg style="left:438px;top:44px" width="23" height="14" viewBox="0 0 23 14" shape-rendering="crispEdges"><rect x="2" y="1" width="19" height="11" fill="#eeede9"/><rect x="1" y="0" width="9" height="1" fill="#808080"/><rect x="0" y="13" width="21" height="1" fill="#808080"/><rect x="0" y="12" width="22" height="1" fill="#808080"/><rect x="0" y="5" width="2" height="1" fill="#808080"/><rect x="0" y="9" width="2" height="1" fill="#808080"/><rect x="21" y="9" width="1" height="1" fill="#808080"/><rect x="0" y="7" width="2" height="1" fill="#808080"/><rect x="21" y="7" width="1" height="1" fill="#808080"/><rect x="0" y="8" width="2" height="1" fill="#808080"/><rect x="21" y="8" width="1" height="1" fill="#808080"/><rect x="0" y="10" width="2" height="1" fill="#808080"/><rect x="21" y="10" width="1" height="1" fill="#808080"/><rect x="0" y="2" width="2" height="1" fill="#808080"/><rect x="0" y="3" width="2" height="1" fill="#808080"/><rect x="0" y="11" width="2" height="1" fill="#808080"/><rect x="21" y="11" width="1" height="1" fill="#808080"/><rect x="0" y="6" width="2" height="1" fill="#808080"/><rect x="21" y="6" width="1" height="1" fill="#808080"/><rect x="0" y="4" width="2" height="1" fill="#808080"/><rect x="1" y="1" width="1" height="1" fill="#808080"/><rect x="4" y="3" width="1" height="1" fill="#008000"/><rect x="5" y="4" width="1" height="1" fill="#008000"/><rect x="8" y="6" width="2" height="1" fill="#008000"/><rect x="2" y="2" width="3" height="1" fill="#008000"/><rect x="12" y="8" width="2" height="1" fill="#008000"/><rect x="16" y="10" width="2" height="1" fill="#008000"/><rect x="6" y="5" width="2" height="1" fill="#008000"/><rect x="14" y="9" width="2" height="1" fill="#008000"/><rect x="18" y="11" width="2" height="1" fill="#008000"/><rect x="10" y="7" width="2" height="1" fill="#008000"/><rect x="11" y="0" width="3" height="1" fill="#800000"/><rect x="15" y="0" width="3" height="1" fill="#800000"/><rect x="19" y="0" width="1" height="1" fill="#800000"/><rect x="21" y="0" width="1" height="1" fill="#800000"/><rect x="11" y="2" width="3" height="1" fill="#800000"/><rect x="15" y="2" width="3" height="1" fill="#800000"/><rect x="19" y="2" width="1" height="1" fill="#800000"/><rect x="21" y="2" width="1" height="1" fill="#800000"/><rect x="11" y="3" width="2" height="1" fill="#800000"/><rect x="15" y="3" width="2" height="1" fill="#800000"/><rect x="19" y="3" width="1" height="1" fill="#800000"/><rect x="21" y="3" width="1" height="1" fill="#800000"/><rect x="11" y="4" width="1" height="1" fill="#800000"/><rect x="13" y="4" width="1" height="1" fill="#800000"/><rect x="15" y="4" width="3" height="1" fill="#800000"/><rect x="20" y="4" width="1" height="1" fill="#800000"/><rect x="11" y="1" width="1" height="1" fill="#800000"/><rect x="13" y="1" width="1" height="1" fill="#800000"/><rect x="15" y="1" width="2" height="1" fill="#800000"/><rect x="19" y="1" width="1" height="1" fill="#800000"/><rect x="21" y="1" width="1" height="1" fill="#800000"/></svg><svg style="left:469px;top:44px" width="23" height="14" viewBox="0 0 23 14" shape-rendering="crispEdges"><rect x="2" y="1" width="19" height="11" fill="#eeede9"/><rect x="1" y="0" width="9" height="1" fill="#808080"/><rect x="0" y="13" width="21" height="1" fill="#808080"/><rect x="0" y="12" width="22" height="1" fill="#808080"/><rect x="0" y="5" width="2" height="1" fill="#808080"/><rect x="0" y="9" width="2" height="1" fill="#808080"/><rect x="21" y="9" width="1" height="1" fill="#808080"/><rect x="0" y="7" width="2" height="1" fill="#808080"/><rect x="21" y="7" width="1" height="1" fill="#808080"/><rect x="0" y="8" width="2" height="1" fill="#808080"/><rect x="21" y="8" width="1" height="1" fill="#808080"/><rect x="0" y="10" width="2" height="1" fill="#808080"/><rect x="21" y="10" width="1" height="1" fill="#808080"/><rect x="0" y="2" width="2" height="1" fill="#808080"/><rect x="0" y="3" width="2" height="1" fill="#808080"/><rect x="0" y="11" width="2" height="1" fill="#808080"/><rect x="21" y="11" width="1" height="1" fill="#808080"/><rect x="0" y="6" width="2" height="1" fill="#808080"/><rect x="21" y="6" width="1" height="1" fill="#808080"/><rect x="0" y="4" width="2" height="1" fill="#808080"/><rect x="1" y="1" width="1" height="1" fill="#808080"/><rect x="4" y="10" width="1" height="1" fill="#008000"/><rect x="6" y="10" width="1" height="1" fill="#008000"/><rect x="8" y="10" width="7" height="1" fill="#008000"/><rect x="2" y="4" width="1" height="1" fill="#008000"/><rect x="5" y="4" width="2" height="1" fill="#008000"/><rect x="8" y="4" width="1" height="1" fill="#008000"/><rect x="2" y="6" width="1" height="1" fill="#008000"/><rect x="4" y="6" width="1" height="1" fill="#008000"/><rect x="6" y="6" width="1" height="1" fill="#008000"/><rect x="8" y="6" width="1" height="1" fill="#008000"/><rect x="10" y="6" width="1" height="1" fill="#008000"/><rect x="2" y="5" width="1" height="1" fill="#008000"/><rect x="4" y="5" width="1" height="1" fill="#008000"/><rect x="7" y="5" width="1" height="1" fill="#008000"/><rect x="9" y="5" width="1" height="1" fill="#008000"/><rect x="7" y="12" width="12" height="1" fill="#008000"/><rect x="5" y="11" width="1" height="1" fill="#008000"/><rect x="8" y="11" width="8" height="1" fill="#008000"/><rect x="3" y="8" width="1" height="1" fill="#008000"/><rect x="5" y="8" width="1" height="1" fill="#008000"/><rect x="7" y="8" width="1" height="1" fill="#008000"/><rect x="10" y="8" width="3" height="1" fill="#008000"/><rect x="4" y="2" width="3" height="1" fill="#008000"/><rect x="3" y="3" width="1" height="1" fill="#008000"/><rect x="7" y="3" width="1" height="1" fill="#008000"/><rect x="3" y="9" width="1" height="1" fill="#008000"/><rect x="5" y="9" width="1" height="1" fill="#008000"/><rect x="7" y="9" width="1" height="1" fill="#008000"/><rect x="13" y="9" width="1" height="1" fill="#008000"/><rect x="2" y="7" width="1" height="1" fill="#008000"/><rect x="4" y="7" width="1" height="1" fill="#008000"/><rect x="6" y="7" width="1" height="1" fill="#008000"/><rect x="9" y="7" width="1" height="1" fill="#008000"/><rect x="11" y="7" width="1" height="1" fill="#008000"/><rect x="11" y="4" width="3" height="1" fill="#800000"/><rect x="15" y="4" width="3" height="1" fill="#800000"/><rect x="19" y="4" width="2" height="1" fill="#800000"/><rect x="11" y="1" width="2" height="1" fill="#800000"/><rect x="15" y="1" width="2" height="1" fill="#800000"/><rect x="19" y="1" width="1" height="1" fill="#800000"/><rect x="21" y="1" width="1" height="1" fill="#800000"/><rect x="11" y="0" width="3" height="1" fill="#800000"/><rect x="15" y="0" width="3" height="1" fill="#800000"/><rect x="19" y="0" width="2" height="1" fill="#800000"/><rect x="11" y="3" width="2" height="1" fill="#800000"/><rect x="16" y="3" width="2" height="1" fill="#800000"/><rect x="19" y="3" width="1" height="1" fill="#800000"/><rect x="21" y="3" width="1" height="1" fill="#800000"/><rect x="11" y="2" width="2" height="1" fill="#800000"/><rect x="15" y="2" width="3" height="1" fill="#800000"/><rect x="19" y="2" width="1" height="1" fill="#800000"/><rect x="21" y="2" width="1" height="1" fill="#800000"/></svg><svg style="left:500px;top:44px" width="23" height="14" viewBox="0 0 23 14" shape-rendering="crispEdges"><rect x="2" y="1" width="19" height="11" fill="#eeede9"/><rect x="1" y="0" width="8" height="1" fill="#808080"/><rect x="0" y="13" width="21" height="1" fill="#808080"/><rect x="0" y="12" width="22" height="1" fill="#808080"/><rect x="0" y="5" width="2" height="1" fill="#808080"/><rect x="0" y="9" width="2" height="1" fill="#808080"/><rect x="21" y="9" width="1" height="1" fill="#808080"/><rect x="0" y="7" width="2" height="1" fill="#808080"/><rect x="21" y="7" width="1" height="1" fill="#808080"/><rect x="0" y="8" width="2" height="1" fill="#808080"/><rect x="21" y="8" width="1" height="1" fill="#808080"/><rect x="0" y="10" width="2" height="1" fill="#808080"/><rect x="21" y="10" width="1" height="1" fill="#808080"/><rect x="0" y="2" width="2" height="1" fill="#808080"/><rect x="0" y="3" width="2" height="1" fill="#808080"/><rect x="0" y="11" width="2" height="1" fill="#808080"/><rect x="21" y="11" width="1" height="1" fill="#808080"/><rect x="0" y="6" width="2" height="1" fill="#808080"/><rect x="21" y="6" width="1" height="1" fill="#808080"/><rect x="0" y="4" width="2" height="1" fill="#808080"/><rect x="1" y="1" width="1" height="1" fill="#808080"/><rect x="4" y="8" width="1" height="1" fill="#008000"/><rect x="8" y="8" width="1" height="1" fill="#008000"/><rect x="11" y="8" width="1" height="1" fill="#008000"/><rect x="15" y="8" width="1" height="1" fill="#008000"/><rect x="18" y="8" width="1" height="1" fill="#008000"/><rect x="5" y="7" width="3" height="1" fill="#008000"/><rect x="12" y="7" width="3" height="1" fill="#008000"/><rect x="19" y="7" width="1" height="1" fill="#008000"/><rect x="9" y="9" width="2" height="1" fill="#008000"/><rect x="16" y="9" width="2" height="1" fill="#008000"/><rect x="3" y="9" width="1" height="1" fill="#606060"/><rect x="10" y="1" width="4" height="1" fill="#800000"/><rect x="16" y="1" width="1" height="1" fill="#800000"/><rect x="19" y="1" width="2" height="1" fill="#800000"/><rect x="10" y="0" width="1" height="1" fill="#800000"/><rect x="13" y="0" width="1" height="1" fill="#800000"/><rect x="15" y="0" width="3" height="1" fill="#800000"/><rect x="19" y="0" width="3" height="1" fill="#800000"/><rect x="10" y="2" width="4" height="1" fill="#800000"/><rect x="16" y="2" width="1" height="1" fill="#800000"/><rect x="19" y="2" width="3" height="1" fill="#800000"/><rect x="10" y="3" width="1" height="1" fill="#800000"/><rect x="13" y="3" width="1" height="1" fill="#800000"/><rect x="16" y="3" width="1" height="1" fill="#800000"/><rect x="19" y="3" width="2" height="1" fill="#800000"/><rect x="10" y="4" width="1" height="1" fill="#800000"/><rect x="13" y="4" width="1" height="1" fill="#800000"/><rect x="16" y="4" width="1" height="1" fill="#800000"/><rect x="19" y="4" width="2" height="1" fill="#800000"/></svg><svg style="left:531px;top:44px" width="23" height="14" viewBox="0 0 23 14" shape-rendering="crispEdges"><rect x="2" y="1" width="19" height="11" fill="#eeede9"/><rect x="1" y="0" width="11" height="1" fill="#808080"/><rect x="0" y="13" width="21" height="1" fill="#808080"/><rect x="0" y="12" width="22" height="1" fill="#808080"/><rect x="0" y="5" width="2" height="1" fill="#808080"/><rect x="0" y="9" width="2" height="1" fill="#808080"/><rect x="21" y="9" width="1" height="1" fill="#808080"/><rect x="0" y="7" width="2" height="1" fill="#808080"/><rect x="21" y="7" width="1" height="1" fill="#808080"/><rect x="0" y="8" width="2" height="1" fill="#808080"/><rect x="21" y="8" width="1" height="1" fill="#808080"/><rect x="0" y="10" width="2" height="1" fill="#808080"/><rect x="21" y="10" width="1" height="1" fill="#808080"/><rect x="0" y="2" width="2" height="1" fill="#808080"/><rect x="0" y="3" width="2" height="1" fill="#808080"/><rect x="0" y="11" width="2" height="1" fill="#808080"/><rect x="21" y="11" width="1" height="1" fill="#808080"/><rect x="0" y="6" width="2" height="1" fill="#808080"/><rect x="21" y="6" width="1" height="1" fill="#808080"/><rect x="0" y="4" width="2" height="1" fill="#808080"/><rect x="1" y="1" width="1" height="1" fill="#808080"/><rect x="12" y="8" width="1" height="1" fill="#008000"/><rect x="15" y="8" width="1" height="1" fill="#008000"/><rect x="18" y="8" width="1" height="1" fill="#008000"/><rect x="13" y="7" width="2" height="1" fill="#008000"/><rect x="19" y="7" width="1" height="1" fill="#008000"/><rect x="16" y="9" width="2" height="1" fill="#008000"/><rect x="5" y="8" width="4" height="1" fill="#ffffff"/><rect x="6" y="7" width="3" height="1" fill="#ffffff"/><rect x="5" y="10" width="4" height="1" fill="#ffffff"/><rect x="5" y="9" width="4" height="1" fill="#ffffff"/><rect x="3" y="9" width="2" height="1" fill="#000000"/><rect x="3" y="7" width="2" height="1" fill="#000000"/><rect x="5" y="4" width="4" height="1" fill="#000000"/><rect x="3" y="6" width="3" height="1" fill="#000000"/><rect x="4" y="5" width="6" height="1" fill="#000000"/><rect x="3" y="8" width="2" height="1" fill="#000000"/><rect x="4" y="10" width="1" height="1" fill="#a09000"/><rect x="9" y="10" width="1" height="1" fill="#a09000"/><rect x="5" y="11" width="4" height="1" fill="#a09000"/><rect x="8" y="6" width="2" height="1" fill="#a09000"/><rect x="5" y="7" width="1" height="1" fill="#a09000"/><rect x="9" y="8" width="1" height="1" fill="#a09000"/><rect x="7" y="10" width="2" height="1" fill="#b00000"/><rect x="8" y="9" width="1" height="1" fill="#b00000"/><rect x="7" y="7" width="1" height="1" fill="#0000ff"/><rect x="9" y="7" width="1" height="1" fill="#0000ff"/><rect x="13" y="4" width="3" height="1" fill="#800000"/><rect x="18" y="4" width="1" height="1" fill="#800000"/><rect x="21" y="4" width="1" height="1" fill="#800000"/><rect x="13" y="1" width="2" height="1" fill="#800000"/><rect x="18" y="1" width="1" height="1" fill="#800000"/><rect x="21" y="1" width="1" height="1" fill="#800000"/><rect x="13" y="0" width="3" height="1" fill="#800000"/><rect x="17" y="0" width="3" height="1" fill="#800000"/><rect x="21" y="0" width="1" height="1" fill="#800000"/><rect x="13" y="2" width="3" height="1" fill="#800000"/><rect x="18" y="2" width="1" height="1" fill="#800000"/><rect x="21" y="2" width="1" height="1" fill="#800000"/><rect x="14" y="3" width="2" height="1" fill="#800000"/><rect x="18" y="3" width="1" height="1" fill="#800000"/><rect x="21" y="3" width="1" height="1" fill="#800000"/></svg><svg style="left:568px;top:44px" width="23" height="14" viewBox="0 0 23 14" shape-rendering="crispEdges"><rect x="2" y="1" width="19" height="11" fill="#eeede9"/><rect x="0" y="12" width="22" height="1" fill="#808080"/><rect x="0" y="13" width="21" height="1" fill="#808080"/><rect x="0" y="10" width="2" height="1" fill="#808080"/><rect x="21" y="10" width="1" height="1" fill="#808080"/><rect x="0" y="2" width="2" height="1" fill="#808080"/><rect x="0" y="5" width="2" height="1" fill="#808080"/><rect x="1" y="0" width="3" height="1" fill="#808080"/><rect x="0" y="6" width="2" height="1" fill="#808080"/><rect x="21" y="6" width="1" height="1" fill="#808080"/><rect x="0" y="8" width="2" height="1" fill="#808080"/><rect x="21" y="8" width="1" height="1" fill="#808080"/><rect x="0" y="3" width="2" height="1" fill="#808080"/><rect x="0" y="9" width="2" height="1" fill="#808080"/><rect x="21" y="9" width="1" height="1" fill="#808080"/><rect x="0" y="11" width="2" height="1" fill="#808080"/><rect x="21" y="11" width="1" height="1" fill="#808080"/><rect x="0" y="7" width="2" height="1" fill="#808080"/><rect x="21" y="7" width="1" height="1" fill="#808080"/><rect x="0" y="4" width="2" height="1" fill="#808080"/><rect x="1" y="1" width="1" height="1" fill="#808080"/><rect x="12" y="8" width="1" height="1" fill="#008000"/><rect x="15" y="8" width="1" height="1" fill="#008000"/><rect x="18" y="8" width="1" height="1" fill="#008000"/><rect x="13" y="7" width="2" height="1" fill="#008000"/><rect x="19" y="7" width="1" height="1" fill="#008000"/><rect x="16" y="9" width="2" height="1" fill="#008000"/><rect x="5" y="8" width="4" height="1" fill="#ffffff"/><rect x="6" y="7" width="3" height="1" fill="#ffffff"/><rect x="5" y="10" width="4" height="1" fill="#ffffff"/><rect x="5" y="9" width="4" height="1" fill="#ffffff"/><rect x="3" y="9" width="2" height="1" fill="#000000"/><rect x="3" y="7" width="2" height="1" fill="#000000"/><rect x="5" y="4" width="4" height="1" fill="#000000"/><rect x="3" y="6" width="3" height="1" fill="#000000"/><rect x="4" y="5" width="6" height="1" fill="#000000"/><rect x="3" y="8" width="2" height="1" fill="#000000"/><rect x="4" y="10" width="1" height="1" fill="#a09000"/><rect x="9" y="10" width="1" height="1" fill="#a09000"/><rect x="5" y="11" width="4" height="1" fill="#a09000"/><rect x="8" y="6" width="2" height="1" fill="#a09000"/><rect x="5" y="7" width="1" height="1" fill="#a09000"/><rect x="9" y="8" width="1" height="1" fill="#a09000"/><rect x="7" y="10" width="2" height="1" fill="#b00000"/><rect x="8" y="9" width="1" height="1" fill="#b00000"/><rect x="7" y="7" width="1" height="1" fill="#0000ff"/><rect x="9" y="7" width="1" height="1" fill="#0000ff"/><rect x="7" y="4" width="1" height="1" fill="#0000ff"/><rect x="6" y="5" width="1" height="1" fill="#0000ff"/><rect x="8" y="5" width="1" height="1" fill="#0000ff"/><rect x="5" y="4" width="1" height="1" fill="#800000"/><rect x="7" y="4" width="1" height="1" fill="#800000"/><rect x="9" y="4" width="1" height="1" fill="#800000"/><rect x="11" y="4" width="1" height="1" fill="#800000"/><rect x="13" y="4" width="3" height="1" fill="#800000"/><rect x="18" y="4" width="1" height="1" fill="#800000"/><rect x="21" y="4" width="1" height="1" fill="#800000"/><rect x="5" y="1" width="1" height="1" fill="#800000"/><rect x="7" y="1" width="1" height="1" fill="#800000"/><rect x="9" y="1" width="1" height="1" fill="#800000"/><rect x="11" y="1" width="1" height="1" fill="#800000"/><rect x="13" y="1" width="2" height="1" fill="#800000"/><rect x="18" y="1" width="1" height="1" fill="#800000"/><rect x="21" y="1" width="1" height="1" fill="#800000"/><rect x="5" y="0" width="3" height="1" fill="#800000"/><rect x="10" y="0" width="1" height="1" fill="#800000"/><rect x="13" y="0" width="3" height="1" fill="#800000"/><rect x="17" y="0" width="3" height="1" fill="#800000"/><rect x="21" y="0" width="1" height="1" fill="#800000"/><rect x="5" y="2" width="3" height="1" fill="#800000"/><rect x="9" y="2" width="3" height="1" fill="#800000"/><rect x="13" y="2" width="3" height="1" fill="#800000"/><rect x="18" y="2" width="1" height="1" fill="#800000"/><rect x="21" y="2" width="1" height="1" fill="#800000"/><rect x="5" y="3" width="2" height="1" fill="#800000"/><rect x="9" y="3" width="1" height="1" fill="#800000"/><rect x="11" y="3" width="1" height="1" fill="#800000"/><rect x="14" y="3" width="2" height="1" fill="#800000"/><rect x="18" y="3" width="1" height="1" fill="#800000"/><rect x="21" y="3" width="1" height="1" fill="#800000"/></svg>
<div style="left:560px;top:42px;width:1px;height:18px;background:#808080"></div>
<div style="left:561px;top:42px;width:1px;height:18px;background:#fff"></div>
<span class="t" style="top:72px;font-size:11px;line-height:11px;color:#000;letter-spacing:-0.6px;left:6px;">FFT</span>
<div style="left:30px;top:67px;width:63px;height:21px;background:#fff;box-shadow:inset 1px 1px #808080,inset -1px -1px #fff,inset 2px 2px #404040,inset -2px -2px #d4d0c8;"></div>
<div style="left:75px;top:69px;width:16px;height:17px;background:#d4d0c8;box-shadow:inset -1px -1px #404040,inset 1px 1px #d4d0c8,inset -2px -2px #808080,inset 2px 2px #fff"></div>
<svg style="left:79px;top:75px" width="7" height="4" shape-rendering="crispEdges"><rect x="0" y="0" width="7" height="1" fill="#000"/><rect x="1" y="1" width="5" height="1" fill="#000"/><rect x="2" y="2" width="3" height="1" fill="#000"/><rect x="3" y="3" width="1" height="1" fill="#000"/></svg>
<span class="t" style="top:72px;font-size:11px;line-height:11px;color:#000;letter-spacing:-0.3px;left:34px;">32768</span>
<span class="t" style="top:72px;font-size:11px;line-height:11px;color:#000;letter-spacing:-0.2px;left:100px;">Window</span>
<div style="left:143px;top:67px;width:73px;height:21px;background:#fff;box-shadow:inset 1px 1px #808080,inset -1px -1px #fff,inset 2px 2px #404040,inset -2px -2px #d4d0c8;"></div>
<div style="left:198px;top:69px;width:16px;height:17px;background:#d4d0c8;box-shadow:inset -1px -1px #404040,inset 1px 1px #d4d0c8,inset -2px -2px #808080,inset 2px 2px #fff"></div>
<svg style="left:202px;top:75px" width="7" height="4" shape-rendering="crispEdges"><rect x="0" y="0" width="7" height="1" fill="#000"/><rect x="1" y="1" width="5" height="1" fill="#000"/><rect x="2" y="2" width="3" height="1" fill="#000"/><rect x="3" y="3" width="1" height="1" fill="#000"/></svg>
<span class="t" style="top:72px;font-size:11px;line-height:11px;color:#000;letter-spacing:-0.3px;left:147px;">Uniform</span>
<span class="t" style="top:72px;font-size:11px;line-height:11px;color:#000;letter-spacing:-0.33px;left:226px;">Delay for phase estimation (ms)</span>
<div style="left:378px;top:67px;width:53px;height:20px;background:#fff;box-shadow:inset 1px 1px #808080,inset -1px -1px #fff,inset 2px 2px #404040,inset -2px -2px #d4d0c8;"></div>
<span class="t" style="top:72px;font-size:11px;line-height:11px;color:#000;letter-spacing:-0.3px;left:382px;">0.000</span>
<div style="left:438px;top:68px;width:30px;height:20px;background:#d4d0c8;box-shadow:inset -1px -1px #404040,inset 1px 1px #fff,inset -2px -2px #808080,inset 2px 2px #d4d0c8;"></div>
<span class="t" style="top:72px;font-size:11px;line-height:11px;color:#000;left:353.0px;width:200px;text-align:center;">Get</span>
<div style="left:473px;top:68px;width:36px;height:20px;background:#d4d0c8;box-shadow:inset -1px -1px #404040,inset 1px 1px #fff,inset -2px -2px #808080,inset 2px 2px #d4d0c8;"></div>
<span class="t" style="top:72px;font-size:11px;line-height:11px;color:#000;left:391.0px;width:200px;text-align:center;">Zero</span>
<div style="left:515px;top:68px;width:29px;height:20px;background:#d4d0c8;box-shadow:inset -1px -1px #404040,inset 1px 1px #fff,inset -2px -2px #808080,inset 2px 2px #d4d0c8;"></div>
<span class="t" style="top:72px;font-size:11px;line-height:11px;color:#000;left:429.5px;width:200px;text-align:center;">Inv</span>
<div style="left:0px;top:91px;width:1024px;height:1px;background:#808080"></div>
<div style="left:1px;top:92px;width:959px;height:1px;background:#404040"></div>
<div style="left:0px;top:91px;width:1px;height:628px;background:#808080"></div>
<div style="left:1px;top:92px;width:1px;height:627px;background:#404040"></div>
<div style="left:0px;top:719px;width:1024px;height:1px;background:#fff"></div>
<div style="left:960px;top:92px;width:1px;height:627px;background:#fff"></div>
<div style="left:960px;top:92px;width:64px;height:1px;background:#fff"></div>
<div style="left:961px;top:718px;width:63px;height:1px;background:#808080"></div>
<div style="left:58px;top:130px;width:874px;height:552px;background:#000"></div>
<div style="left:58px;top:130px;width:1px;height:552px;background:#c8c800"></div>
<div style="left:59px;top:185px;width:873px;height:1px;background:#008020"></div>
<div style="left:59px;top:240px;width:873px;height:1px;background:#008020"></div>
<div style="left:59px;top:295px;width:873px;height:1px;background:#008020"></div>
<div style="left:59px;top:350px;width:873px;height:1px;background:#008020"></div>
<div style="left:59px;top:460px;width:873px;height:1px;background:#008020"></div>
<div style="left:59px;top:515px;width:873px;height:1px;background:#008020"></div>
<div style="left:59px;top:570px;width:873px;height:1px;background:#008020"></div>
<div style="left:59px;top:625px;width:873px;height:1px;background:#008020"></div>
<div style="left:59px;top:405px;width:873px;height:1px;background:#00ff00"></div>
<div style="left:232px;top:130px;width:1px;height:552px;background:#008020"></div>
<div style="left:407px;top:130px;width:1px;height:552px;background:#008020"></div>
<div style="left:581px;top:130px;width:1px;height:552px;background:#008020"></div>
<div style="left:756px;top:130px;width:1px;height:552px;background:#008020"></div>
<span class="t" style="top:113px;font-size:13px;line-height:13px;color:#000;letter-spacing:-0.05px;left:61px;">Impulse response (nV/V)</span>
<span class="t" style="top:180px;font-size:12px;line-height:12px;color:#000;letter-spacing:0.3px;right:969px;text-align:right;">3.438</span>
<span class="t" style="top:235px;font-size:12px;line-height:12px;color:#000;letter-spacing:0.3px;right:969px;text-align:right;">2.578</span>
<span class="t" style="top:290px;font-size:12px;line-height:12px;color:#000;letter-spacing:0.3px;right:969px;text-align:right;">1.719</span>
<span class="t" style="top:345px;font-size:12px;line-height:12px;color:#000;letter-spacing:0.3px;right:969px;text-align:right;">0.859</span>
<span class="t" style="top:400px;font-size:12px;line-height:12px;color:#000;letter-spacing:0.3px;right:969px;text-align:right;">0.000</span>
<span class="t" style="top:455px;font-size:12px;line-height:12px;color:#000;letter-spacing:0.3px;right:969px;text-align:right;"><i style="font-style:normal;letter-spacing:1px">-</i>0.859</span>
<span class="t" style="top:510px;font-size:12px;line-height:12px;color:#000;letter-spacing:0.3px;right:969px;text-align:right;"><i style="font-style:normal;letter-spacing:1px">-</i>1.719</span>
<span class="t" style="top:565px;font-size:12px;line-height:12px;color:#000;letter-spacing:0.3px;right:969px;text-align:right;"><i style="font-style:normal;letter-spacing:1px">-</i>2.578</span>
<span class="t" style="top:620px;font-size:12px;line-height:12px;color:#000;letter-spacing:0.3px;right:969px;text-align:right;"><i style="font-style:normal;letter-spacing:1px">-</i>3.438</span>
<span class="t" style="top:686px;font-size:12px;line-height:12px;color:#000;left:-36px;width:200px;text-align:center;">0.00</span>
<span class="t" style="top:686px;font-size:12px;line-height:12px;color:#000;left:138px;width:200px;text-align:center;">3.63</span>
<span class="t" style="top:686px;font-size:12px;line-height:12px;color:#000;left:313px;width:200px;text-align:center;">7.27</span>
<span class="t" style="top:686px;font-size:12px;line-height:12px;color:#000;left:486px;width:200px;text-align:center;">10.90</span>
<span class="t" style="top:686px;font-size:12px;line-height:12px;color:#000;left:661px;width:200px;text-align:center;">14.54</span>
<span class="t" style="top:684px;font-size:12px;line-height:12px;color:#000;left:910px;">ms</span>
<span class="t" style="top:132px;font-size:13px;line-height:13px;color:#000;left:935.5px;">A</span>
<span class="t" style="top:146px;font-size:13px;line-height:13px;color:#000;left:935.5px;">R</span>
<span class="t" style="top:160px;font-size:13px;line-height:13px;color:#000;left:935.5px;">T</span>
<span class="t" style="top:174px;font-size:13px;line-height:13px;color:#000;left:935.5px;">A</span>
<span class="t" style="top:704px;font-size:12px;line-height:12px;color:#000;letter-spacing:0.6px;left:61px;">Cursor:</span>
<span class="t" style="top:704px;font-size:12px;line-height:12px;color:#000;left:111px;">0.000 nV,</span>
<span class="t" style="top:704px;font-size:12px;line-height:12px;color:#000;letter-spacing:0.15px;left:175px;">0.000 ms</span>
<span class="t" style="top:704px;font-size:12px;line-height:12px;color:#000;left:233px;">(0)</span>
<span class="t" style="top:103px;font-size:11px;line-height:11px;color:#000;letter-spacing:-0.2px;right:5px;text-align:right;">Marker</span>
<div style="left:967px;top:120px;width:24px;height:20px;background:#d4d0c8;box-shadow:inset -1px -1px #404040,inset 1px 1px #fff,inset -2px -2px #808080,inset 2px 2px #d4d0c8;"></div>
<span class="t" style="top:125px;font-size:11px;line-height:11px;color:#000;left:879.0px;width:200px;text-align:center;">Set</span>
<div style="left:996px;top:120px;width:23px;height:20px;background:#d4d0c8;box-shadow:inset -1px -1px #404040,inset 1px 1px #fff,inset -2px -2px #808080,inset 2px 2px #d4d0c8;"></div>
<span class="t" style="top:125px;font-size:11px;line-height:11px;color:#000;left:907.5px;width:200px;text-align:center;">Del</span>
<span class="t" style="top:169px;font-size:11px;line-height:11px;color:#000;letter-spacing:-0.2px;right:8px;text-align:right;">Offset</span>
<div style="left:968px;top:164px;width:15px;height:21px;background:#d4d0c8;box-shadow:inset -1px -1px #404040,inset 1px 1px #fff,inset -2px -2px #808080,inset 2px 2px #d4d0c8;"></div>
<svg style="left:971px;top:172px" width="7" height="4" shape-rendering="crispEdges"><rect x="3" y="0" width="1" height="1" fill="#000"/><rect x="2" y="1" width="3" height="1" fill="#000"/><rect x="1" y="2" width="5" height="1" fill="#000"/><rect x="0" y="3" width="7" height="1" fill="#000"/></svg>
<div style="left:968px;top:185px;width:15px;height:22px;background:#d4d0c8;box-shadow:inset -1px -1px #404040,inset 1px 1px #fff,inset -2px -2px #808080,inset 2px 2px #d4d0c8;"></div>
<svg style="left:971px;top:194px" width="7" height="4" shape-rendering="crispEdges"><rect x="0" y="0" width="7" height="1" fill="#000"/><rect x="1" y="1" width="5" height="1" fill="#000"/><rect x="2" y="2" width="3" height="1" fill="#000"/><rect x="3" y="3" width="1" height="1" fill="#000"/></svg>
<div style="left:987px;top:187px;width:33px;height:20px;background:#d4d0c8;box-shadow:inset -1px -1px #404040,inset 1px 1px #fff,inset -2px -2px #808080,inset 2px 2px #d4d0c8;"></div>
<span class="t" style="top:192px;font-size:11px;line-height:11px;color:#000;left:903.5px;width:200px;text-align:center;">Null</span>
<span class="t" style="top:221px;font-size:11px;line-height:11px;color:#000;letter-spacing:-0.2px;right:7px;text-align:right;">Gain</span>
<div style="left:967px;top:235px;width:15px;height:21px;background:#d4d0c8;box-shadow:inset -1px -1px #404040,inset 1px 1px #fff,inset -2px -2px #808080,inset 2px 2px #d4d0c8;"></div>
<svg style="left:970px;top:243px" width="7" height="4" shape-rendering="crispEdges"><rect x="3" y="0" width="1" height="1" fill="#000"/><rect x="2" y="1" width="3" height="1" fill="#000"/><rect x="1" y="2" width="5" height="1" fill="#000"/><rect x="0" y="3" width="7" height="1" fill="#000"/></svg>
<div style="left:967px;top:256px;width:15px;height:21px;background:#d4d0c8;box-shadow:inset -1px -1px #404040,inset 1px 1px #fff,inset -2px -2px #808080,inset 2px 2px #d4d0c8;"></div>
<svg style="left:970px;top:265px" width="7" height="4" shape-rendering="crispEdges"><rect x="0" y="0" width="7" height="1" fill="#000"/><rect x="1" y="1" width="5" height="1" fill="#000"/><rect x="2" y="2" width="3" height="1" fill="#000"/><rect x="3" y="3" width="1" height="1" fill="#000"/></svg>
<div style="left:987px;top:236px;width:33px;height:20px;background:#d4d0c8;box-shadow:inset -1px -1px #404040,inset 1px 1px #fff,inset -2px -2px #808080,inset 2px 2px #d4d0c8;"></div>
<span class="t" style="top:241px;font-size:11px;line-height:11px;color:#000;left:903.5px;width:200px;text-align:center;">Max</span>
<div style="left:987px;top:257px;width:33px;height:21px;background:#d4d0c8;box-shadow:inset -1px -1px #404040,inset 1px 1px #fff,inset -2px -2px #808080,inset 2px 2px #d4d0c8;"></div>
<span class="t" style="top:262px;font-size:11px;line-height:11px;color:#000;left:903.5px;width:200px;text-align:center;">Min</span>
<span class="t" style="top:296px;font-size:11px;line-height:11px;color:#000;letter-spacing:-0.2px;right:7px;text-align:right;">Zoom</span>
<div style="left:967px;top:314px;width:15px;height:21px;background:#d4d0c8;box-shadow:inset -1px -1px #404040,inset 1px 1px #fff,inset -2px -2px #808080,inset 2px 2px #d4d0c8;"></div>
<svg style="left:970px;top:322px" width="7" height="4" shape-rendering="crispEdges"><rect x="3" y="0" width="1" height="1" fill="#000"/><rect x="2" y="1" width="3" height="1" fill="#000"/><rect x="1" y="2" width="5" height="1" fill="#000"/><rect x="0" y="3" width="7" height="1" fill="#000"/></svg>
<div style="left:967px;top:335px;width:15px;height:21px;background:#d4d0c8;box-shadow:inset -1px -1px #404040,inset 1px 1px #fff,inset -2px -2px #808080,inset 2px 2px #d4d0c8;"></div>
<svg style="left:970px;top:343px" width="7" height="4" shape-rendering="crispEdges"><rect x="0" y="0" width="7" height="1" fill="#000"/><rect x="1" y="1" width="5" height="1" fill="#000"/><rect x="2" y="2" width="3" height="1" fill="#000"/><rect x="3" y="3" width="1" height="1" fill="#000"/></svg>
<div style="left:987px;top:314px;width:32px;height:20px;background:#d4d0c8;box-shadow:inset -1px -1px #404040,inset 1px 1px #fff,inset -2px -2px #808080,inset 2px 2px #d4d0c8;"></div>
<span class="t" style="top:319px;font-size:11px;line-height:11px;color:#000;left:903.0px;width:200px;text-align:center;">All</span>
<div style="left:987px;top:336px;width:32px;height:20px;background:#d4d0c8;box-shadow:inset -1px -1px #404040,inset 1px 1px #fff,inset -2px -2px #808080,inset 2px 2px #d4d0c8;"></div>
<span class="t" style="top:341px;font-size:11px;line-height:11px;color:#000;left:903.0px;width:200px;text-align:center;">Max</span>
<span class="t" style="top:375px;font-size:11px;line-height:11px;color:#000;letter-spacing:-0.2px;right:10px;text-align:right;">Scroll</span>
<div style="left:971px;top:391px;width:21px;height:15px;background:#d4d0c8;box-shadow:inset -1px -1px #404040,inset 1px 1px #fff,inset -2px -2px #808080,inset 2px 2px #d4d0c8;"></div>
<div style="left:992px;top:391px;width:22px;height:15px;background:#d4d0c8;box-shadow:inset -1px -1px #404040,inset 1px 1px #fff,inset -2px -2px #808080,inset 2px 2px #d4d0c8;"></div>
<svg style="left:978px;top:394px" width="4" height="7" shape-rendering="crispEdges"><rect x="0" y="3" width="1" height="1" fill="#000"/><rect x="1" y="2" width="1" height="3" fill="#000"/><rect x="2" y="1" width="1" height="5" fill="#000"/><rect x="3" y="0" width="1" height="7" fill="#000"/></svg>
<svg style="left:1001px;top:394px" width="4" height="7" shape-rendering="crispEdges"><rect x="3" y="3" width="1" height="1" fill="#000"/><rect x="2" y="2" width="1" height="3" fill="#000"/><rect x="1" y="1" width="1" height="5" fill="#000"/><rect x="0" y="0" width="1" height="7" fill="#000"/></svg>
<span class="t" style="top:725px;font-size:11px;line-height:11px;color:#000;letter-spacing:-0.1px;left:2px;">Ready</span>
<div style="left:767px;top:722px;width:61px;height:16px;background:#d4d0c8;box-shadow:inset 1px 1px #808080,inset -1px -1px #fff;"></div>
<span class="t" style="top:725px;font-size:11px;line-height:11px;color:#000;letter-spacing:0.0px;left:771px;">L:-100.0dB</span>
<div style="left:830px;top:722px;width:61px;height:16px;background:#d4d0c8;box-shadow:inset 1px 1px #808080,inset -1px -1px #fff;"></div>
<span class="t" style="top:725px;font-size:11px;line-height:11px;color:#000;letter-spacing:0.0px;left:834px;">R:-100.0dB</span>
<div style="left:893px;top:722px;width:131px;height:16px;background:#d4d0c8;box-shadow:inset 1px 1px #808080,inset -1px -1px #fff;"></div>
<span class="t" style="top:725px;font-size:11px;line-height:11px;color:#000;letter-spacing:-0.3px;left:897px;">Impulse Response</span>
<div style="left:0px;top:738px;width:1024px;height:30px;background:#d4d0c8"></div>
<div style="left:0px;top:739px;width:1024px;height:1px;background:#fff"></div>
<div style="left:2px;top:742px;width:51px;height:22px;background:#d4d0c8;box-shadow:inset -1px -1px #404040,inset 1px 1px #fff,inset -2px -2px #808080,inset 2px 2px #d4d0c8;"></div>
<svg style="left:3px;top:743px" width="18" height="17" viewBox="0 0 18 17"><defs><linearGradient id="fr" x1="0" y1="0" x2="1" y2="1"><stop offset="0" stop-color="#f8a060"/><stop offset="1" stop-color="#e03808"/></linearGradient><linearGradient id="fg" x1="0" y1="0" x2="1" y2="1"><stop offset="0" stop-color="#a8f060"/><stop offset="1" stop-color="#30a020"/></linearGradient><linearGradient id="fb" x1="0" y1="0" x2="1" y2="1"><stop offset="0" stop-color="#80b0ff"/><stop offset="1" stop-color="#1850d0"/></linearGradient><linearGradient id="fy" x1="0" y1="0" x2="1" y2="1"><stop offset="0" stop-color="#fff060"/><stop offset="1" stop-color="#e8a800"/></linearGradient></defs><path d="M3 2.5 Q5.5 0.8 9 2 L8.3 8 Q5 7 2.2 8.2 Z" fill="url(#fr)"/><path d="M9.8 2.6 Q12.8 4 16.3 2.6 L15.6 8.6 Q12.3 10 9.1 8.6 Z" fill="url(#fg)"/><path d="M2 9 Q5 7.8 8.1 8.9 L7.4 14.8 Q4.3 13.8 1.2 15 Z" fill="url(#fb)"/><path d="M8.9 9.5 Q12 10.9 15.4 9.5 L14.7 15.4 Q11.5 16.8 8.2 15.4 Z" fill="url(#fy)"/></svg>
<span class="t" style="top:747px;font-size:11.5px;line-height:11.5px;color:#000;font-weight:bold;letter-spacing:0.1px;left:22px;-webkit-text-stroke:0.35px #000;">Пуск</span>
<div style="left:60px;top:744px;width:3px;height:20px;box-shadow:inset 1px 1px #fff,inset -1px -1px #808080"></div>
<svg style="left:70px;top:746px" width="16" height="16" viewBox="0 0 16 16"><defs><linearGradient id="wa" x1="0" y1="1" x2="1" y2="0"><stop offset="0" stop-color="#f07010"/><stop offset="0.6" stop-color="#f8b020"/><stop offset="1" stop-color="#f8e060"/></linearGradient></defs><path d="M9 0.8 L15.5 7.5 L8 15.2 L1.5 8.5 Z" fill="#fff" stroke="#202020" stroke-width="1.5"/><path d="M1.5 14.5 L4 10 L9 5 L13.8 1.5 L12 5.5 L7 11 Z" fill="url(#wa)" stroke="#a05010" stroke-width="0.6"/></svg><svg style="left:92px;top:745px" width="18" height="18" viewBox="0 0 18 18"><defs><radialGradient id="ie" cx="0.4" cy="0.35" r="0.7"><stop offset="0" stop-color="#60d0ff"/><stop offset="1" stop-color="#1060c0"/></radialGradient></defs><ellipse cx="9.5" cy="9.5" rx="7" ry="6.8" fill="url(#ie)"/><rect x="6" y="7" width="6" height="1.6" fill="#e8f0ff"/><rect x="6" y="11" width="6" height="1.6" fill="#e8f0ff"/><path d="M2 16 Q1 12 6 7" stroke="#80c0f0" stroke-width="1.3" fill="none"/><circle cx="15" cy="3" r="1.8" fill="#a0d0f0"/></svg><svg style="left:116px;top:746px" width="16" height="15" viewBox="0 0 16 15"><rect x="0.5" y="1" width="13" height="13" rx="2.5" fill="#1a60d0"/><path d="M10 3.5 Q4 2.5 3 7.5 Q3 12 8.5 11.5 L10 10" stroke="#fff8c0" stroke-width="2" fill="none"/><rect x="6" y="5" width="4" height="4" fill="#e0f0ff"/><path d="M5 8 L8 6" stroke="#000" stroke-width="1.3"/><circle cx="14.3" cy="5.5" r="1.3" fill="#f06020"/></svg><svg style="left:139px;top:748px" width="15" height="10" viewBox="0 0 15 10"><path d="M2 7 Q4 3 7 5 Q9 1 12 4 Q14 5 12 8 Q7 9 2 7 Z" fill="#ececec"/></svg><svg style="left:162px;top:746px" width="14" height="16" viewBox="0 0 14 16"><path d="M2.5 13 Q3 10 5.5 9.5 L9.5 8.5 Q11 8 10.5 6 Q9 5 9.5 3.5 Q10 2 11.5 2.5" stroke="#000" stroke-width="2.6" fill="none" stroke-linecap="round" stroke-linejoin="round"/></svg><svg style="left:182px;top:745px" width="20" height="18" viewBox="0 0 20 18"><rect x="6" y="1" width="13" height="12" fill="#0010f0"/><path d="M6.5 4 Q8 1 9.5 3.5 Q11 6 12.5 3.5 Q14 1 15.5 3.5 Q17 6 18.5 3.5" stroke="#e0e040" stroke-width="1" fill="none"/><path d="M10 9 H12 V7.5 H14 V9 H16 V7.5 H18.5" stroke="#20f0f0" stroke-width="1" fill="none"/><rect x="11" y="10" width="8" height="3" fill="#000090"/><circle cx="7.5" cy="11.8" r="4.8" fill="#f00000"/><circle cx="6.5" cy="10" r="1" fill="#ffe0e0"/></svg><svg style="left:210px;top:746px" width="12" height="16" viewBox="0 0 12 16"><defs><linearGradient id="calc" x1="0" y1="0" x2="1" y2="1"><stop offset="0" stop-color="#c8d8ff"/><stop offset="1" stop-color="#7890e0"/></linearGradient></defs><rect x="0.5" y="0.5" width="10.5" height="15" rx="1" fill="url(#calc)" stroke="#8090c0" stroke-width="0.8"/><rect x="2" y="2" width="7.5" height="3" fill="#5070d0"/><rect x="2.5" y="7" width="2" height="1.6" fill="#fff"/><rect x="5" y="8.5" width="2" height="1.6" fill="#fff"/><rect x="2.5" y="10" width="2" height="1.6" fill="#fff"/><rect x="5" y="11.5" width="2" height="1.6" fill="#fff"/><rect x="7.5" y="6.5" width="1.8" height="1.8" fill="#f08020"/></svg><svg style="left:231px;top:746px" width="16" height="16" viewBox="0 0 16 16"><rect x="0.5" y="3.5" width="13" height="12" fill="#60c0f0" stroke="#1020c0" stroke-width="1"/><ellipse cx="8.5" cy="7.5" rx="5.8" ry="7" fill="#b0e0f0" stroke="#000030" stroke-width="1.5"/><path d="M9 2 Q14 4 13.5 9 Q13 13.5 9 14 Z" fill="#f0b030"/><path d="M8 5.5 L12.5 8 L8 10.5 Z" fill="#000"/><path d="M13 3 Q15.5 7 13 13" stroke="#1020c0" stroke-width="1" fill="none"/></svg><svg style="left:254px;top:746px" width="16" height="16" viewBox="0 0 16 16"><rect x="0.75" y="0.75" width="14.5" height="14.5" fill="#f8fbff" stroke="#2050c0" stroke-width="1.5"/><path d="M3 4 H5.5 L5.5 10 L8 4 H9.5 L9.5 10 L11.5 4 H13.5 L10 12 H8.5 L8.3 7.5 L6.5 12 H5 Z" fill="#2a5cd0"/></svg><svg style="left:277px;top:746px" width="16" height="16" viewBox="0 0 16 16"><rect x="0.75" y="0.75" width="14.5" height="14.5" fill="#f8fff8" stroke="#3a8a3a" stroke-width="1.5"/><path d="M3.5 4 H6.5 L8 6.5 L9.5 4 H12.5 L9.5 8 L12.5 12 H9.5 L8 9.5 L6.5 12 H3.5 L6.5 8 Z" fill="#208020"/></svg>
<div style="left:424px;top:744px;width:3px;height:20px;box-shadow:inset 1px 1px #fff,inset -1px -1px #808080"></div>
<div style="left:431px;top:742px;width:160px;height:22px;background:#d4d0c8;box-shadow:inset -1px -1px #404040,inset 1px 1px #fff,inset -2px -2px #808080,inset 2px 2px #d4d0c8;"></div>
<svg style="left:436px;top:746px" width="16" height="16" viewBox="0 0 16 16"><rect x="0.5" y="3.5" width="13" height="12" fill="#60c0f0" stroke="#1020c0" stroke-width="1"/><ellipse cx="8.5" cy="7.5" rx="5.8" ry="7" fill="#b0e0f0" stroke="#000030" stroke-width="1.5"/><path d="M9 2 Q14 4 13.5 9 Q13 13.5 9 14 Z" fill="#f0b030"/><path d="M8 5.5 L12.5 8 L8 10.5 Z" fill="#000"/><path d="M13 3 Q15.5 7 13 13" stroke="#1020c0" stroke-width="1" fill="none"/></svg>
<span class="t" style="top:748px;font-size:11px;line-height:11px;color:#000;letter-spacing:-0.1px;left:455px;">Adobe Photoshop</span>
<div style="left:593px;top:742px;width:161px;height:22px;background-color:#fff;background-image:linear-gradient(45deg,#d4d0c8 25%,transparent 25%,transparent 75%,#d4d0c8 75%),linear-gradient(45deg,#d4d0c8 25%,transparent 25%,transparent 75%,#d4d0c8 75%);background-size:2px 2px;background-position:0 0,1px 1px;box-shadow:inset 1px 1px #404040,inset -1px -1px #fff,inset 2px 2px #808080"></div>
<svg style="left:599px;top:746px" width="16" height="16" viewBox="0 0 16 16" shape-rendering="crispEdges"><rect x="0" y="0" width="7" height="1" fill="#f4fcfc"/><rect x="9" y="0" width="1" height="1" fill="#f4fcfc"/><rect x="4" y="15" width="3" height="1" fill="#f4fcfc"/><rect x="0" y="1" width="9" height="1" fill="#f4fcfc"/><rect x="0" y="9" width="1" height="1" fill="#f4fcfc"/><rect x="4" y="9" width="2" height="1" fill="#f4fcfc"/><rect x="0" y="6" width="1" height="1" fill="#f4fcfc"/><rect x="4" y="6" width="3" height="1" fill="#f4fcfc"/><rect x="0" y="7" width="1" height="1" fill="#f4fcfc"/><rect x="4" y="7" width="3" height="1" fill="#f4fcfc"/><rect x="0" y="13" width="4" height="1" fill="#f4fcfc"/><rect x="0" y="2" width="4" height="1" fill="#f4fcfc"/><rect x="10" y="2" width="1" height="1" fill="#f4fcfc"/><rect x="0" y="10" width="1" height="1" fill="#f4fcfc"/><rect x="4" y="10" width="3" height="1" fill="#f4fcfc"/><rect x="0" y="5" width="1" height="1" fill="#f4fcfc"/><rect x="4" y="5" width="2" height="1" fill="#f4fcfc"/><rect x="7" y="5" width="1" height="1" fill="#f4fcfc"/><rect x="0" y="8" width="1" height="1" fill="#f4fcfc"/><rect x="4" y="8" width="3" height="1" fill="#f4fcfc"/><rect x="0" y="14" width="1" height="1" fill="#f4fcfc"/><rect x="2" y="14" width="6" height="1" fill="#f4fcfc"/><rect x="10" y="14" width="1" height="1" fill="#f4fcfc"/><rect x="0" y="3" width="2" height="1" fill="#f4fcfc"/><rect x="0" y="11" width="2" height="1" fill="#f4fcfc"/><rect x="5" y="11" width="1" height="1" fill="#f4fcfc"/><rect x="0" y="12" width="2" height="1" fill="#f4fcfc"/><rect x="0" y="4" width="1" height="1" fill="#f4fcfc"/><rect x="4" y="4" width="1" height="1" fill="#f4fcfc"/><rect x="6" y="4" width="1" height="1" fill="#f4fcfc"/><rect x="5" y="4" width="1" height="1" fill="#40e0e8"/><rect x="7" y="4" width="1" height="1" fill="#40e0e8"/><rect x="12" y="4" width="2" height="1" fill="#40e0e8"/><rect x="9" y="1" width="6" height="1" fill="#40e0e8"/><rect x="8" y="7" width="2" height="1" fill="#40e0e8"/><rect x="13" y="7" width="2" height="1" fill="#40e0e8"/><rect x="12" y="10" width="3" height="1" fill="#40e0e8"/><rect x="10" y="13" width="4" height="1" fill="#40e0e8"/><rect x="7" y="0" width="2" height="1" fill="#40e0e8"/><rect x="10" y="0" width="5" height="1" fill="#40e0e8"/><rect x="11" y="2" width="4" height="1" fill="#40e0e8"/><rect x="8" y="8" width="7" height="1" fill="#40e0e8"/><rect x="1" y="14" width="1" height="1" fill="#40e0e8"/><rect x="8" y="14" width="2" height="1" fill="#40e0e8"/><rect x="11" y="14" width="4" height="1" fill="#40e0e8"/><rect x="0" y="15" width="1" height="1" fill="#40e0e8"/><rect x="2" y="15" width="1" height="1" fill="#40e0e8"/><rect x="7" y="15" width="5" height="1" fill="#40e0e8"/><rect x="11" y="11" width="4" height="1" fill="#40e0e8"/><rect x="6" y="5" width="1" height="1" fill="#40e0e8"/><rect x="12" y="3" width="2" height="1" fill="#40e0e8"/><rect x="7" y="6" width="1" height="1" fill="#40e0e8"/><rect x="14" y="6" width="1" height="1" fill="#40e0e8"/><rect x="12" y="12" width="3" height="1" fill="#40e0e8"/><rect x="7" y="9" width="1" height="1" fill="#40e0e8"/><rect x="14" y="9" width="1" height="1" fill="#40e0e8"/><rect x="14" y="4" width="2" height="1" fill="#5080b0"/><rect x="14" y="13" width="2" height="1" fill="#5080b0"/><rect x="15" y="2" width="1" height="1" fill="#5080b0"/><rect x="15" y="5" width="1" height="1" fill="#5080b0"/><rect x="15" y="11" width="1" height="1" fill="#5080b0"/><rect x="7" y="7" width="1" height="1" fill="#5080b0"/><rect x="15" y="7" width="1" height="1" fill="#5080b0"/><rect x="7" y="8" width="1" height="1" fill="#5080b0"/><rect x="15" y="8" width="1" height="1" fill="#5080b0"/><rect x="15" y="14" width="1" height="1" fill="#5080b0"/><rect x="1" y="15" width="1" height="1" fill="#5080b0"/><rect x="3" y="15" width="1" height="1" fill="#5080b0"/><rect x="12" y="15" width="4" height="1" fill="#5080b0"/><rect x="14" y="3" width="2" height="1" fill="#5080b0"/><rect x="15" y="1" width="1" height="1" fill="#5080b0"/><rect x="15" y="10" width="1" height="1" fill="#5080b0"/><rect x="15" y="0" width="1" height="1" fill="#5080b0"/><rect x="15" y="6" width="1" height="1" fill="#5080b0"/><rect x="6" y="9" width="1" height="1" fill="#5080b0"/><rect x="15" y="9" width="1" height="1" fill="#5080b0"/><rect x="15" y="12" width="1" height="1" fill="#5080b0"/><rect x="1" y="9" width="3" height="1" fill="#ff0000"/><rect x="8" y="9" width="6" height="1" fill="#ff0000"/><rect x="1" y="6" width="3" height="1" fill="#ff0000"/><rect x="8" y="6" width="6" height="1" fill="#ff0000"/><rect x="1" y="5" width="3" height="1" fill="#ff0000"/><rect x="8" y="5" width="7" height="1" fill="#ff0000"/><rect x="2" y="11" width="3" height="1" fill="#ff0000"/><rect x="6" y="11" width="5" height="1" fill="#ff0000"/><rect x="4" y="2" width="6" height="1" fill="#ff0000"/><rect x="1" y="10" width="3" height="1" fill="#ff0000"/><rect x="7" y="10" width="5" height="1" fill="#ff0000"/><rect x="2" y="3" width="10" height="1" fill="#ff0000"/><rect x="2" y="12" width="10" height="1" fill="#ff0000"/><rect x="1" y="7" width="3" height="1" fill="#ff0000"/><rect x="10" y="7" width="3" height="1" fill="#ff0000"/><rect x="1" y="4" width="3" height="1" fill="#ff0000"/><rect x="8" y="4" width="4" height="1" fill="#ff0000"/><rect x="1" y="8" width="3" height="1" fill="#ff0000"/><rect x="4" y="13" width="6" height="1" fill="#ff0000"/></svg>
<span class="t" style="top:748px;font-size:12px;line-height:12px;color:#000;font-weight:bold;letter-spacing:0.1px;left:618px;">Untitled - Arta</span>
<div style="left:823px;top:744px;width:3px;height:20px;box-shadow:inset 1px 1px #fff,inset -1px -1px #808080"></div>
<div style="left:834px;top:746px;width:17px;height:16px;background:#0a246a"></div>
<span class="t" style="top:749px;font-size:10.5px;line-height:10.5px;color:#fff;letter-spacing:-0.2px;left:742px;width:200px;text-align:center;">EN</span>
<div style="left:854px;top:742px;width:1px;height:26px;background:#808080"></div>
<div style="left:855px;top:742px;width:1px;height:26px;background:#fff"></div>
<div style="left:891px;top:742px;width:132px;height:23px;background:#d4d0c8;box-shadow:inset 1px 1px #808080,inset -1px -1px #fff;"></div>
<svg style="left:896px;top:751px" width="8" height="7" viewBox="0 0 8 7" shape-rendering="crispEdges"><rect x="0" y="3" width="2" height="1" fill="#000"/><rect x="4" y="3" width="2" height="1" fill="#000"/><rect x="2" y="1" width="2" height="1" fill="#000"/><rect x="6" y="1" width="2" height="1" fill="#000"/><rect x="1" y="4" width="2" height="1" fill="#000"/><rect x="5" y="4" width="2" height="1" fill="#000"/><rect x="1" y="2" width="2" height="1" fill="#000"/><rect x="5" y="2" width="2" height="1" fill="#000"/><rect x="2" y="5" width="2" height="1" fill="#000"/><rect x="6" y="5" width="2" height="1" fill="#000"/><rect x="3" y="0" width="1" height="1" fill="#000"/><rect x="7" y="0" width="1" height="1" fill="#000"/><rect x="3" y="6" width="1" height="1" fill="#000"/><rect x="7" y="6" width="1" height="1" fill="#000"/></svg>
<svg style="left:909px;top:746px" width="15" height="15" viewBox="0 0 15 15"><path d="M0 1 H4 L7 9 L5.5 13.5 Z" fill="#ff1010"/><path d="M12.5 1 L8 7.5 L6.5 5 L9.5 1 Z" fill="#ff1010"/><path d="M7.5 7.5 L12 12" stroke="#000" stroke-width="2"/><path d="M9 13.5 H13.5 V9 Z" fill="#000"/></svg>
<svg style="left:930px;top:746px" width="10" height="16" viewBox="0 0 10 16" shape-rendering="crispEdges"><rect x="0" y="0" width="10" height="1" fill="#000"/><rect x="0" y="15" width="10" height="1" fill="#000"/><rect x="0" y="2" width="1" height="1" fill="#000"/><rect x="9" y="2" width="1" height="1" fill="#000"/><rect x="0" y="5" width="1" height="1" fill="#000"/><rect x="9" y="5" width="1" height="1" fill="#000"/><rect x="0" y="8" width="1" height="1" fill="#000"/><rect x="9" y="8" width="1" height="1" fill="#000"/><rect x="0" y="14" width="1" height="1" fill="#000"/><rect x="9" y="14" width="1" height="1" fill="#000"/><rect x="0" y="11" width="1" height="1" fill="#000"/><rect x="9" y="11" width="1" height="1" fill="#000"/><rect x="0" y="1" width="1" height="1" fill="#000"/><rect x="9" y="1" width="1" height="1" fill="#000"/><rect x="0" y="7" width="1" height="1" fill="#000"/><rect x="9" y="7" width="1" height="1" fill="#000"/><rect x="0" y="4" width="1" height="1" fill="#000"/><rect x="9" y="4" width="1" height="1" fill="#000"/><rect x="0" y="10" width="1" height="1" fill="#000"/><rect x="9" y="10" width="1" height="1" fill="#000"/><rect x="0" y="13" width="1" height="1" fill="#000"/><rect x="9" y="13" width="1" height="1" fill="#000"/><rect x="0" y="3" width="1" height="1" fill="#000"/><rect x="9" y="3" width="1" height="1" fill="#000"/><rect x="0" y="9" width="1" height="1" fill="#000"/><rect x="9" y="9" width="1" height="1" fill="#000"/><rect x="0" y="6" width="1" height="1" fill="#000"/><rect x="9" y="6" width="1" height="1" fill="#000"/><rect x="0" y="12" width="1" height="1" fill="#000"/><rect x="9" y="12" width="1" height="1" fill="#000"/><rect x="1" y="4" width="8" height="1" fill="#008000"/><rect x="1" y="3" width="8" height="1" fill="#008000"/><rect x="1" y="1" width="8" height="1" fill="#008000"/><rect x="1" y="7" width="8" height="1" fill="#008000"/><rect x="1" y="6" width="8" height="1" fill="#008000"/><rect x="1" y="2" width="8" height="1" fill="#008000"/><rect x="1" y="5" width="8" height="1" fill="#008000"/><rect x="1" y="12" width="8" height="1" fill="#20f020"/><rect x="1" y="9" width="8" height="1" fill="#20f020"/><rect x="1" y="10" width="8" height="1" fill="#20f020"/><rect x="1" y="13" width="8" height="1" fill="#20f020"/><rect x="1" y="11" width="8" height="1" fill="#20f020"/><rect x="1" y="8" width="8" height="1" fill="#20f020"/><rect x="1" y="14" width="8" height="1" fill="#20f020"/></svg>
<svg style="left:948px;top:746px" width="11" height="15" viewBox="0 0 11 15"><rect x="1" y="1.5" width="9" height="13" rx="2.5" fill="#1030d0" stroke="#000040" stroke-width="1"/><rect x="3" y="0" width="5" height="2" fill="#a0a0b0"/><path d="M5.5 3 V7 M3.5 5 H7.5" stroke="#ff2020" stroke-width="1.2"/><path d="M3.5 12 H7.5" stroke="#ff2020" stroke-width="1.2"/><path d="M1.5 6 V12" stroke="#40a0ff" stroke-width="1"/></svg>
<svg style="left:962px;top:746px" width="18" height="16" viewBox="0 0 18 16"><path d="M1 1 L5 0.5 L16 2 L16.5 14.5 L5 15.5 L1.5 12 Z" fill="#1020c0" stroke="#000060" stroke-width="0.8"/><path d="M1.5 1.5 L4.5 4.5 L4.5 15" stroke="#6080ff" stroke-width="1.2" fill="none"/><g fill="#8090ff"><rect x="8" y="5" width="1" height="1"/><rect x="10" y="5" width="1" height="1"/><rect x="12" y="5" width="1" height="1"/><rect x="9" y="7" width="1" height="1"/><rect x="11" y="7" width="1" height="1"/><rect x="8" y="9" width="1" height="1"/><rect x="10" y="9" width="1" height="1"/><rect x="12" y="9" width="1" height="1"/></g><path d="M5 15.5 L17 14" stroke="#208080" stroke-width="1"/></svg>
<span class="t" style="top:748px;font-size:11.5px;line-height:11.5px;color:#000;letter-spacing:-0.4px;left:989px;">1:18</span>
<div style="left:295px;top:169px;width:434px;height:400px;background:#d4d0c8;box-shadow:inset -1px -1px #404040,inset 1px 1px #d4d0c8,inset -2px -2px #808080,inset 2px 2px #fff"></div>
<div style="left:298px;top:172px;width:428px;height:18px;background:linear-gradient(to right,#0a246a,#a6caf0)"></div>
<span class="t" style="top:176px;font-size:11.5px;line-height:11.5px;color:#fff;font-weight:bold;letter-spacing:-0.05px;left:300px;">Audio Devices Setup</span>
<div style="left:708px;top:174px;width:16px;height:14px;background:#d4d0c8;box-shadow:inset -1px -1px #404040,inset 1px 1px #fff,inset -2px -2px #808080,inset 2px 2px #d4d0c8;"></div>
<svg style="left:712px;top:177px" width="8" height="7" viewBox="0 0 8 7" shape-rendering="crispEdges"><rect x="2" y="4" width="4" height="1" fill="#000"/><rect x="3" y="3" width="2" height="1" fill="#000"/><rect x="1" y="1" width="2" height="1" fill="#000"/><rect x="5" y="1" width="2" height="1" fill="#000"/><rect x="2" y="2" width="4" height="1" fill="#000"/><rect x="0" y="0" width="2" height="1" fill="#000"/><rect x="6" y="0" width="2" height="1" fill="#000"/><rect x="0" y="6" width="2" height="1" fill="#000"/><rect x="6" y="6" width="2" height="1" fill="#000"/><rect x="1" y="5" width="2" height="1" fill="#000"/><rect x="5" y="5" width="2" height="1" fill="#000"/></svg>
<div style="left:309px;top:205px;width:404px;height:100px;border:1px solid #808080;box-shadow:inset 1px 1px #fff,1px 1px #fff"></div>
<div style="left:316px;top:204px;width:59px;height:3px;background:#d4d0c8"></div>
<span class="t" style="top:201px;font-size:11px;line-height:11px;color:#000;letter-spacing:-0.25px;left:318px;">Sound card</span>
<span class="t" style="top:227px;font-size:11px;line-height:11px;color:#000;letter-spacing:-0.1px;left:324px;">Input Device</span>
<span class="t" style="top:253px;font-size:11px;line-height:11px;color:#000;letter-spacing:-0.1px;left:324px;">Output Device</span>
<div style="left:408px;top:219px;width:290px;height:21px;background:#fff;box-shadow:inset 1px 1px #808080,inset -1px -1px #fff,inset 2px 2px #404040,inset -2px -2px #d4d0c8;"></div>
<div style="left:680px;top:221px;width:16px;height:17px;background:#d4d0c8;box-shadow:inset -1px -1px #404040,inset 1px 1px #d4d0c8,inset -2px -2px #808080,inset 2px 2px #fff"></div>
<svg style="left:684px;top:227px" width="7" height="4" shape-rendering="crispEdges"><rect x="0" y="0" width="7" height="1" fill="#000"/><rect x="1" y="1" width="5" height="1" fill="#000"/><rect x="2" y="2" width="3" height="1" fill="#000"/><rect x="3" y="3" width="1" height="1" fill="#000"/></svg>
<span class="t" style="top:225px;font-size:11px;line-height:11px;color:#000;letter-spacing:-0.25px;left:412px;">SB Audigy 2 [FFC0]</span>
<div style="left:408px;top:248px;width:290px;height:21px;background:#fff;box-shadow:inset 1px 1px #808080,inset -1px -1px #fff,inset 2px 2px #404040,inset -2px -2px #d4d0c8;"></div>
<div style="left:680px;top:250px;width:16px;height:17px;background:#d4d0c8;box-shadow:inset -1px -1px #404040,inset 1px 1px #d4d0c8,inset -2px -2px #808080,inset 2px 2px #fff"></div>
<svg style="left:684px;top:256px" width="7" height="4" shape-rendering="crispEdges"><rect x="0" y="0" width="7" height="1" fill="#000"/><rect x="1" y="1" width="5" height="1" fill="#000"/><rect x="2" y="2" width="3" height="1" fill="#000"/><rect x="3" y="3" width="1" height="1" fill="#000"/></svg>
<span class="t" style="top:254px;font-size:11px;line-height:11px;color:#000;letter-spacing:-0.25px;left:412px;">SB Audigy 2 [FFC0]</span>
<span class="t" style="top:286px;font-size:11px;line-height:11px;color:#000;letter-spacing:-0.25px;left:325px;">WaveFormat</span>
<svg style="left:415px;top:285px" width="12" height="12" viewBox="0 0 12 12"><path d="M10.5 1.5 A6 6 0 0 0 1.5 10.5" stroke="#808080" stroke-width="1" fill="none"/><path d="M9.8 2.2 A5 5 0 0 0 2.2 9.8" stroke="#404040" stroke-width="1" fill="none"/><path d="M1.5 10.5 A6 6 0 0 0 10.5 1.5" stroke="#fff" stroke-width="1" fill="none"/><circle cx="6" cy="6" r="4.2" fill="#fff"/><circle cx="6" cy="6" r="1.8" fill="#000"/></svg>
<span class="t" style="top:287px;font-size:11px;line-height:11px;color:#000;letter-spacing:-0.25px;left:432px;">16 bit</span>
<svg style="left:482px;top:285px" width="12" height="12" viewBox="0 0 12 12"><path d="M10.5 1.5 A6 6 0 0 0 1.5 10.5" stroke="#808080" stroke-width="1" fill="none"/><path d="M9.8 2.2 A5 5 0 0 0 2.2 9.8" stroke="#404040" stroke-width="1" fill="none"/><path d="M1.5 10.5 A6 6 0 0 0 10.5 1.5" stroke="#fff" stroke-width="1" fill="none"/><circle cx="6" cy="6" r="4.2" fill="#fff"/></svg>
<span class="t" style="top:287px;font-size:11px;line-height:11px;color:#000;letter-spacing:-0.25px;left:500px;">24 bit</span>
<svg style="left:549px;top:285px" width="12" height="12" viewBox="0 0 12 12"><path d="M10.5 1.5 A6 6 0 0 0 1.5 10.5" stroke="#808080" stroke-width="1" fill="none"/><path d="M9.8 2.2 A5 5 0 0 0 2.2 9.8" stroke="#404040" stroke-width="1" fill="none"/><path d="M1.5 10.5 A6 6 0 0 0 10.5 1.5" stroke="#fff" stroke-width="1" fill="none"/><circle cx="6" cy="6" r="4.2" fill="#fff"/></svg>
<span class="t" style="top:287px;font-size:11px;line-height:11px;color:#000;letter-spacing:-0.25px;left:566px;">32 bit</span>
<span class="t" style="top:287px;font-size:11px;line-height:11px;color:#000;letter-spacing:-0.3px;left:626px;">Extensible</span>
<div style="left:683px;top:285px;width:13px;height:13px;background:#fff;box-shadow:inset 1px 1px #808080,inset -1px -1px #fff,inset 2px 2px #404040,inset -2px -2px #d4d0c8;"></div>
<div style="left:309px;top:322px;width:404px;height:117px;border:1px solid #808080;box-shadow:inset 1px 1px #fff,1px 1px #fff"></div>
<div style="left:316px;top:321px;width:108px;height:3px;background:#d4d0c8"></div>
<span class="t" style="top:318px;font-size:11px;line-height:11px;color:#000;letter-spacing:-0.25px;left:318px;">I/O Amplifier Interface</span>
<span class="t" style="top:341px;font-size:11px;line-height:11px;color:#000;letter-spacing:-0.3px;left:321px;">LineIn Sensitivity</span>
<span class="t" style="top:353px;font-size:11px;line-height:11px;color:#000;letter-spacing:-0.3px;left:321px;">(mVpeak - left ch)</span>
<span class="t" style="top:383px;font-size:11px;line-height:11px;color:#000;letter-spacing:-0.35px;left:321px;">Ext. left preamp gain</span>
<span class="t" style="top:411px;font-size:11px;line-height:11px;color:#000;letter-spacing:-0.35px;left:321px;">Ext. right preamp gain</span>
<div style="left:436px;top:341px;width:56px;height:20px;background:#fff;box-shadow:inset 1px 1px #808080,inset -1px -1px #fff,inset 2px 2px #404040,inset -2px -2px #d4d0c8;"></div>
<span class="t" style="top:345px;font-size:12px;line-height:12px;color:#000;letter-spacing:-0.75px;right:534px;text-align:right;">4044.15</span>
<div style="left:436px;top:376px;width:56px;height:20px;background:#fff;box-shadow:inset 1px 1px #808080,inset -1px -1px #fff,inset 2px 2px #404040,inset -2px -2px #d4d0c8;"></div>
<span class="t" style="top:380px;font-size:12px;line-height:12px;color:#000;right:534px;text-align:right;">1</span>
<div style="left:436px;top:407px;width:56px;height:20px;background:#fff;box-shadow:inset 1px 1px #808080,inset -1px -1px #fff,inset 2px 2px #404040,inset -2px -2px #d4d0c8;"></div>
<span class="t" style="top:411px;font-size:12px;line-height:12px;color:#000;right:534px;text-align:right;">1</span>
<span class="t" style="top:341px;font-size:11px;line-height:11px;color:#000;letter-spacing:-0.3px;left:524px;">LineOut Sensitivity</span>
<span class="t" style="top:353px;font-size:11px;line-height:11px;color:#000;letter-spacing:-0.3px;left:524px;">(mVpeak - left ch)</span>
<span class="t" style="top:382px;font-size:11px;line-height:11px;color:#000;letter-spacing:-0.3px;left:524px;">L/R channel diff. (dB)</span>
<span class="t" style="top:412px;font-size:11px;line-height:11px;color:#000;letter-spacing:-0.35px;left:524px;">Power amplifier gain</span>
<div style="left:645px;top:341px;width:57px;height:20px;background:#fff;box-shadow:inset 1px 1px #808080,inset -1px -1px #fff,inset 2px 2px #404040,inset -2px -2px #d4d0c8;"></div>
<span class="t" style="top:345px;font-size:12px;line-height:12px;color:#000;letter-spacing:-0.75px;right:325px;text-align:right;">4000</span>
<div style="left:645px;top:375px;width:57px;height:21px;background:#fff;box-shadow:inset 1px 1px #808080,inset -1px -1px #fff,inset 2px 2px #404040,inset -2px -2px #d4d0c8;"></div>
<span class="t" style="top:379px;font-size:12px;line-height:12px;color:#000;letter-spacing:-0.75px;right:324px;text-align:right;">0.0643003</span>
<div style="left:645px;top:407px;width:57px;height:20px;background:#fff;box-shadow:inset 1px 1px #808080,inset -1px -1px #fff,inset 2px 2px #404040,inset -2px -2px #d4d0c8;"></div>
<span class="t" style="top:411px;font-size:12px;line-height:12px;color:#000;right:324px;text-align:right;">1</span>
<div style="left:309px;top:454px;width:404px;height:59px;border:1px solid #808080;box-shadow:inset 1px 1px #fff,1px 1px #fff"></div>
<div style="left:316px;top:453px;width:62px;height:3px;background:#d4d0c8"></div>
<span class="t" style="top:450px;font-size:11px;line-height:11px;color:#000;letter-spacing:-0.25px;left:318px;">Microphone</span>
<div style="left:318px;top:479px;width:13px;height:13px;background:#fff;box-shadow:inset 1px 1px #808080,inset -1px -1px #fff,inset 2px 2px #404040,inset -2px -2px #d4d0c8;"></div>
<span class="t" style="top:480px;font-size:11px;line-height:11px;color:#000;letter-spacing:-0.2px;left:336px;">Microphone Used On</span>
<div style="left:454px;top:475px;width:65px;height:21px;background:#d4d0c8;box-shadow:inset 1px 1px #808080,inset -1px -1px #fff,inset 2px 2px #404040,inset -2px -2px #d4d0c8;"></div>
<div style="left:501px;top:477px;width:16px;height:17px;background:#d4d0c8;box-shadow:inset -1px -1px #404040,inset 1px 1px #d4d0c8,inset -2px -2px #808080,inset 2px 2px #fff"></div>
<svg style="left:506px;top:484px" width="7" height="4" shape-rendering="crispEdges"><rect x="0" y="0" width="7" height="1" fill="#fff"/><rect x="1" y="1" width="5" height="1" fill="#fff"/><rect x="2" y="2" width="3" height="1" fill="#fff"/><rect x="3" y="3" width="1" height="1" fill="#fff"/></svg>
<svg style="left:505px;top:483px" width="7" height="4" shape-rendering="crispEdges"><rect x="0" y="0" width="7" height="1" fill="#808080"/><rect x="1" y="1" width="5" height="1" fill="#808080"/><rect x="2" y="2" width="3" height="1" fill="#808080"/><rect x="3" y="3" width="1" height="1" fill="#808080"/></svg>
<span class="t" style="top:480px;font-size:11px;line-height:11px;color:#808080;letter-spacing:-0.25px;left:457px;">Left Ch</span>
<span class="t" style="top:481px;font-size:11px;line-height:11px;color:#000;letter-spacing:-0.2px;left:544px;">Sensitivity (mV/Pa)</span>
<div style="left:645px;top:475px;width:57px;height:20px;background:#fff;box-shadow:inset 1px 1px #808080,inset -1px -1px #fff,inset 2px 2px #404040,inset -2px -2px #d4d0c8;"></div>
<span class="t" style="top:479px;font-size:12px;line-height:12px;color:#000;right:324px;text-align:right;">1</span>
<div style="left:310px;top:529px;width:95px;height:23px;background:#d4d0c8;box-shadow:inset -1px -1px #404040,inset 1px 1px #fff,inset -2px -2px #808080,inset 2px 2px #d4d0c8;"></div>
<span class="t" style="top:535px;font-size:11px;line-height:11px;color:#000;letter-spacing:-0.1px;left:257.5px;width:200px;text-align:center;">Save setup</span>
<div style="left:424px;top:529px;width:96px;height:23px;background:#d4d0c8;box-shadow:inset -1px -1px #404040,inset 1px 1px #fff,inset -2px -2px #808080,inset 2px 2px #d4d0c8;"></div>
<span class="t" style="top:535px;font-size:11px;line-height:11px;color:#000;letter-spacing:-0.1px;left:372.0px;width:200px;text-align:center;">Load setup</span>
<div style="left:550px;top:529px;width:76px;height:23px;background:#000"></div>
<div style="left:551px;top:530px;width:74px;height:21px;background:#d4d0c8;box-shadow:inset -1px -1px #404040,inset 1px 1px #fff,inset -2px -2px #808080,inset 2px 2px #d4d0c8;"></div>
<span class="t" style="top:535px;font-size:11px;line-height:11px;color:#000;letter-spacing:-0.1px;left:488.0px;width:200px;text-align:center;">Cancel</span>
<div style="left:637px;top:529px;width:75px;height:23px;background:#d4d0c8;box-shadow:inset -1px -1px #404040,inset 1px 1px #fff,inset -2px -2px #808080,inset 2px 2px #d4d0c8;"></div>
<span class="t" style="top:535px;font-size:11px;line-height:11px;color:#000;letter-spacing:-0.1px;left:574.5px;width:200px;text-align:center;">OK</span></body></html>
